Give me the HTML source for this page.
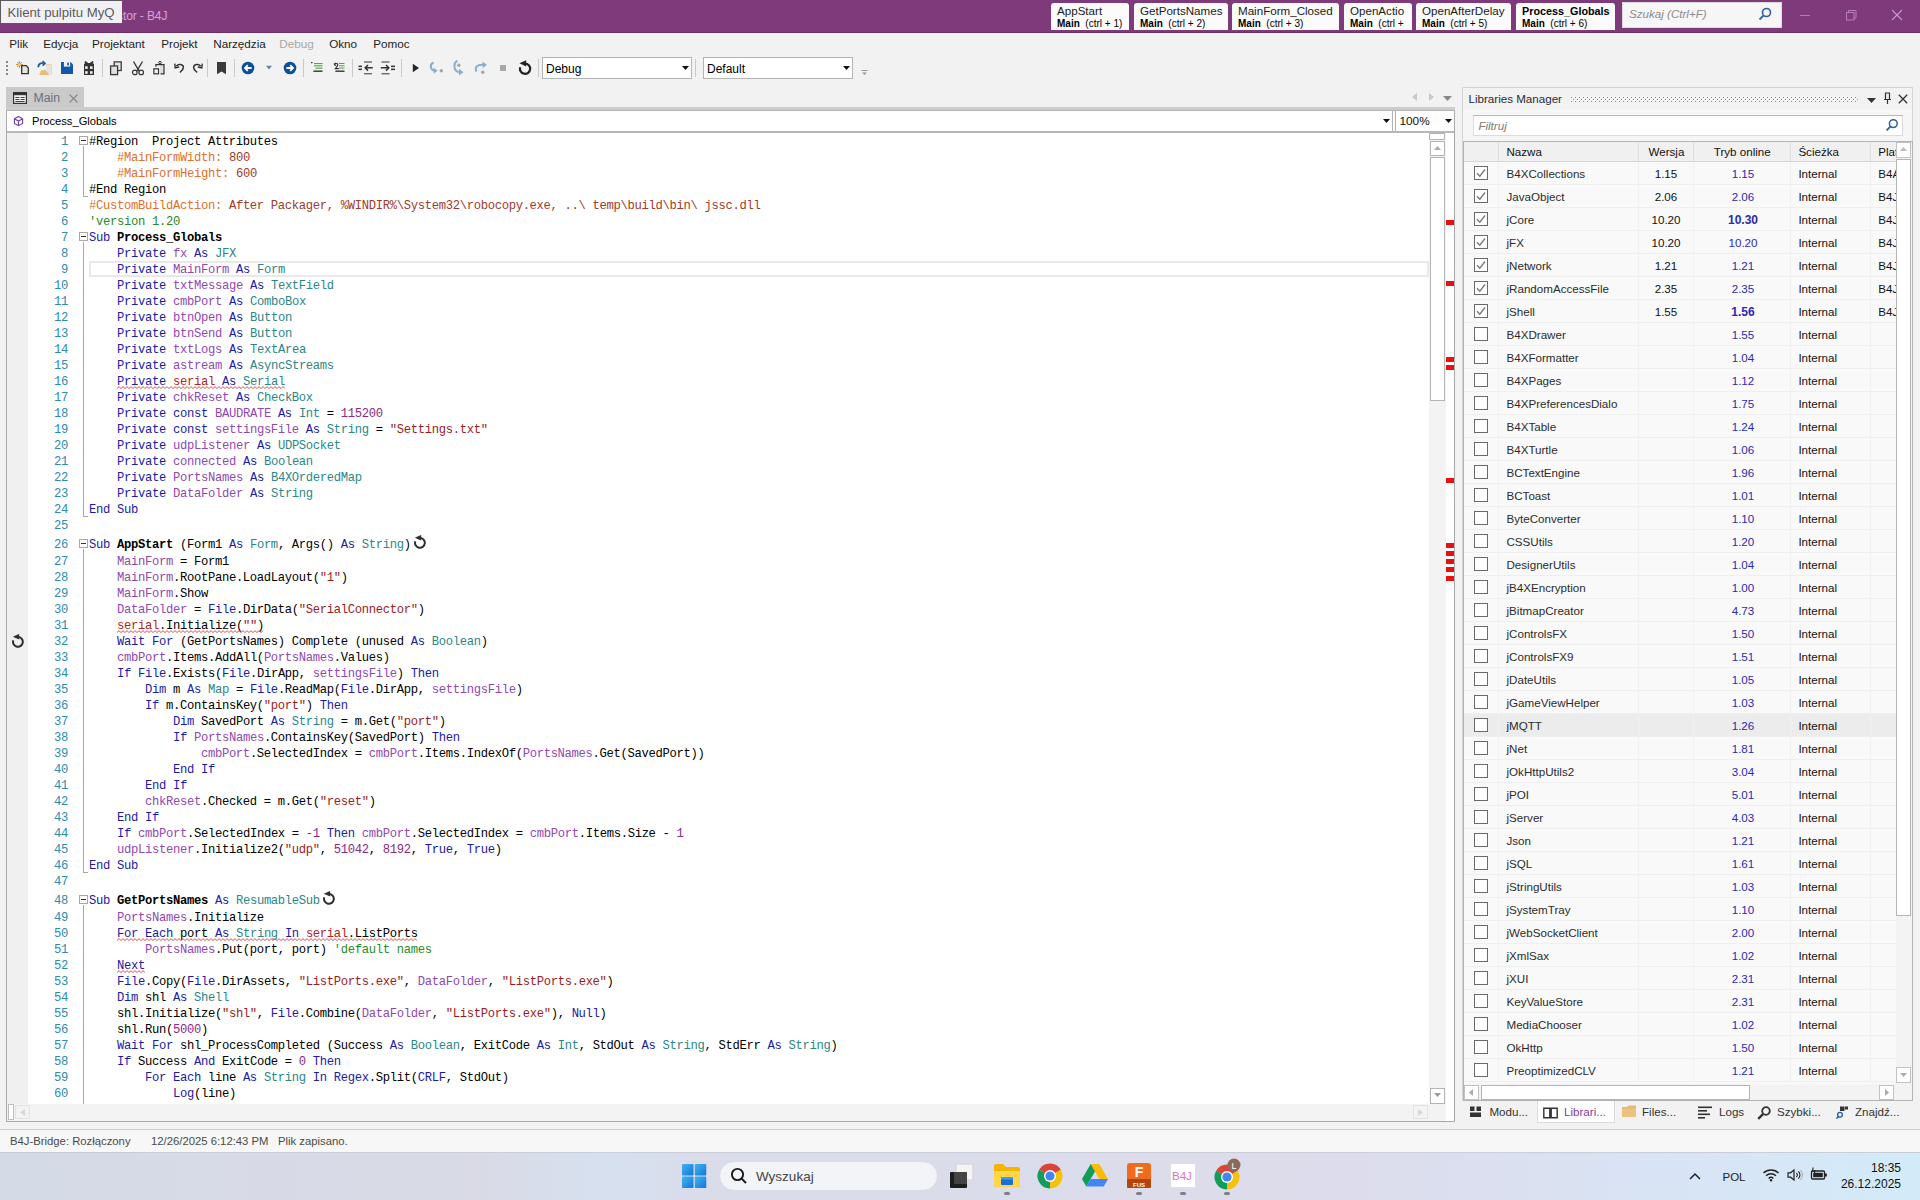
<!DOCTYPE html><html><head><meta charset="utf-8"><style>
*{box-sizing:border-box;margin:0;padding:0}
html,body{width:1920px;height:1200px;overflow:hidden;background:#f2f2f2;font-family:"Liberation Sans",sans-serif;font-size:11.5px;color:#000;position:relative}
.a{position:absolute}
.t{position:absolute;white-space:pre;line-height:1}
.mono{font-family:"Liberation Mono",monospace}
.k{color:#1b1ba4}.t2{color:#2b8787}.v{color:#8f48b4}.s{color:#9b1c1c}.n{color:#8a2a88}.d{color:#e0702a}.e{color:#a03a2a}.c{color:#2a8a2a}.b{font-weight:bold}.r{color:#b02428}
.sq{background-image:linear-gradient(45deg,transparent 35%,#e03030 35%,#e03030 65%,transparent 65%),linear-gradient(-45deg,transparent 35%,#e03030 35%,#e03030 65%,transparent 65%);background-size:4px 3px;background-repeat:repeat-x;background-position:0 100%}
</style></head><body>
<div class="a" style="left:0px;top:0px;width:1920px;height:33px;background:#7f3a7c"></div>
<div class="a" style="left:0px;top:32px;width:1920px;height:1px;background:#6a2f67"></div>
<div class="t " style="left:117px;top:10.14px;font-size:12px;color:#d6a2d4;letter-spacing:-0.1px">ctor - B4J</div>
<div class="a" style="left:0px;top:0px;width:122px;height:24px;background:#f1f1f5;border:1px solid #5a5a5a;border-right:none"></div>
<div class="t " style="left:7.5px;top:5.92px;font-size:13.2px;color:#5b5b5b;">Klient pulpitu MyQ</div>
<div class="a" style="left:1051px;top:3px;width:78px;height:27px;background:#fbfbfb;border-radius:3px 3px 0 0"></div>
<div class="a" style="left:1051px;top:3px;width:78px;height:27px;overflow:hidden">
<div class="t" style="left:6px;top:2.28px;font-size:11.6px;color:#1a1a1a">AppStart</div>
<div class="t" style="left:6px;top:15.73px;font-size:10px;color:#000"><b>Main</b>&nbsp;&nbsp;(ctrl + 1)</div>
</div>
<div class="a" style="left:1134px;top:3px;width:94px;height:27px;background:#fbfbfb;border-radius:3px 3px 0 0"></div>
<div class="a" style="left:1134px;top:3px;width:94px;height:27px;overflow:hidden">
<div class="t" style="left:6px;top:2.28px;font-size:11.6px;color:#1a1a1a">GetPortsNames</div>
<div class="t" style="left:6px;top:15.73px;font-size:10px;color:#000"><b>Main</b>&nbsp;&nbsp;(ctrl + 2)</div>
</div>
<div class="a" style="left:1232px;top:3px;width:107px;height:27px;background:#fbfbfb;border-radius:3px 3px 0 0"></div>
<div class="a" style="left:1232px;top:3px;width:107px;height:27px;overflow:hidden">
<div class="t" style="left:6px;top:2.28px;font-size:11.6px;color:#1a1a1a">MainForm_Closed</div>
<div class="t" style="left:6px;top:15.73px;font-size:10px;color:#000"><b>Main</b>&nbsp;&nbsp;(ctrl + 3)</div>
</div>
<div class="a" style="left:1344px;top:3px;width:68px;height:27px;background:#fbfbfb;border-radius:3px 3px 0 0"></div>
<div class="a" style="left:1344px;top:3px;width:68px;height:27px;overflow:hidden">
<div class="t" style="left:6px;top:2.28px;font-size:11.6px;color:#1a1a1a">OpenActio</div>
<div class="t" style="left:6px;top:15.73px;font-size:10px;color:#000"><b>Main</b>&nbsp;&nbsp;(ctrl +</div>
</div>
<div class="a" style="left:1416px;top:3px;width:95px;height:27px;background:#fbfbfb;border-radius:3px 3px 0 0"></div>
<div class="a" style="left:1416px;top:3px;width:95px;height:27px;overflow:hidden">
<div class="t" style="left:6px;top:2.28px;font-size:11.6px;color:#1a1a1a">OpenAfterDelay</div>
<div class="t" style="left:6px;top:15.73px;font-size:10px;color:#000"><b>Main</b>&nbsp;&nbsp;(ctrl + 5)</div>
</div>
<div class="a" style="left:1516px;top:3px;width:99px;height:27px;background:#fbfbfb;border-radius:3px 3px 0 0"></div>
<div class="a" style="left:1516px;top:3px;width:99px;height:27px;overflow:hidden">
<div class="t" style="left:6px;top:3.26px;font-size:10.8px;font-weight:bold;color:#000">Process_Globals</div>
<div class="t" style="left:6px;top:15.73px;font-size:10px;color:#000"><b>Main</b>&nbsp;&nbsp;(ctrl + 6)</div>
</div>
<div class="a" style="left:1622px;top:2px;width:160px;height:26px;background:#f6f6f6;border:1px solid #dcdcdc"></div>
<div class="t " style="left:1629px;top:8.48px;font-size:11.6px;color:#8c8c8c;font-style:italic">Szukaj (Ctrl+F)</div>
<svg class="a" style="left:1758px;top:7px;" width="14" height="14" viewBox="0 0 14 14"><circle cx="8.5" cy="5.5" r="4" fill="none" stroke="#2c5f9e" stroke-width="1.6"/><line x1="5.6" y1="8.4" x2="1.5" y2="12.5" stroke="#2c5f9e" stroke-width="1.8"/></svg>
<div class="a" style="left:1800px;top:15px;width:10px;height:1px;background:#b07cae"></div>
<svg class="a" style="left:1846px;top:10px;" width="11" height="11" viewBox="0 0 11 11"><rect x="0.5" y="2.5" width="7.5" height="7.5" fill="none" stroke="#b880b6"/><path d="M2.5 2.5V0.5h7.5v7.5h-2" fill="none" stroke="#b880b6"/></svg>
<svg class="a" style="left:1891px;top:9px;" width="12" height="12" viewBox="0 0 12 12"><path d="M1 1L11 11M11 1L1 11" stroke="#c89cc6" stroke-width="1.1"/></svg>
<div class="a" style="left:0px;top:33px;width:1920px;height:1px;background:#fbeefb"></div>
<div class="t " style="left:9.3px;top:38.09px;font-size:11.7px;color:#1e1e1e;">Plik</div>
<div class="t " style="left:43.2px;top:38.09px;font-size:11.7px;color:#1e1e1e;">Edycja</div>
<div class="t " style="left:92px;top:38.09px;font-size:11.7px;color:#1e1e1e;">Projektant</div>
<div class="t " style="left:161.2px;top:38.09px;font-size:11.7px;color:#1e1e1e;">Projekt</div>
<div class="t " style="left:213.2px;top:38.09px;font-size:11.7px;color:#1e1e1e;">Narzędzia</div>
<div class="t " style="left:279.2px;top:38.09px;font-size:11.7px;color:#a8a8a8;">Debug</div>
<div class="t " style="left:329.2px;top:38.09px;font-size:11.7px;color:#1e1e1e;">Okno</div>
<div class="t " style="left:373.2px;top:38.09px;font-size:11.7px;color:#1e1e1e;">Pomoc</div>
<div class="a" style="left:6px;top:61px;width:2px;height:2px;background:#8a8a8a"></div>
<div class="a" style="left:6px;top:65px;width:2px;height:2px;background:#8a8a8a"></div>
<div class="a" style="left:6px;top:69px;width:2px;height:2px;background:#8a8a8a"></div>
<div class="a" style="left:6px;top:73px;width:2px;height:2px;background:#8a8a8a"></div>
<div class="a" style="left:102px;top:59px;width:1px;height:18px;background:#c9c9c9"></div>
<div class="a" style="left:207px;top:59px;width:1px;height:18px;background:#c9c9c9"></div>
<div class="a" style="left:234px;top:59px;width:1px;height:18px;background:#c9c9c9"></div>
<div class="a" style="left:303px;top:59px;width:1px;height:18px;background:#c9c9c9"></div>
<div class="a" style="left:352px;top:59px;width:1px;height:18px;background:#c9c9c9"></div>
<div class="a" style="left:401px;top:59px;width:1px;height:18px;background:#c9c9c9"></div>
<div class="a" style="left:538px;top:59px;width:1px;height:18px;background:#c9c9c9"></div>
<div class="a" style="left:695px;top:59px;width:1px;height:18px;background:#c9c9c9"></div>
<svg class="a" style="left:14px;top:59px;" width="16" height="16" viewBox="0 0 16 16"><g stroke="#e08a1a" stroke-width="0.9"><line x1="5.5" y1="2" x2="5.5" y2="9"/><line x1="2" y1="5.5" x2="9" y2="5.5"/><line x1="3" y1="3" x2="8" y2="8"/><line x1="8" y1="3" x2="3" y2="8"/></g><circle cx="5.5" cy="5.5" r="1.7" fill="#f6d27a" stroke="#e08a1a" stroke-width="0.6"/><path d="M7.7 6.6H12.2L14.3 8.7V14.6H7.7z" fill="#e6e6e6" stroke="#333" stroke-width="1.3"/></svg>
<svg class="a" style="left:37px;top:60px;" width="16" height="16" viewBox="0 0 16 16"><path d="M9 4.5h5.3v10.4" fill="none" stroke="#ecd3a6" stroke-width="1"/><rect x="8.6" y="5" width="5.2" height="9.5" fill="#e4e4e4"/><path d="M9.8 14.9H2.2L4.2 10.3H8.6L12.6 14.9z" fill="#e6bd78"/><path d="M1.6 7.2C0.8 4.6 3.2 2.6 6.8 3.4" fill="none" stroke="#1a5aa8" stroke-width="1.8"/><path d="M5.6 1.2L8 3.5L5.6 5.6" fill="none" stroke="#1a5aa8" stroke-width="1.6"/></svg>
<svg class="a" style="left:61px;top:62px;" width="12" height="12" viewBox="0 0 12 12"><path d="M0 0H9.6L12 2.4V12H0z" fill="#1358a8"/><rect x="2.9" y="0" width="6.3" height="4.6" fill="#eef2f8"/><rect x="6.2" y="0.6" width="1.7" height="2.8" fill="#1358a8"/></svg>
<svg class="a" style="left:83px;top:60px;" width="12" height="16" viewBox="0 0 12 16"><path d="M6 4L2.2 1.4V4zM6 4L9.8 1.4V4z" fill="#333" stroke="#333" stroke-width="1"/><rect x="1" y="4" width="10" height="11" fill="#333"/><rect x="2.1" y="6.3" width="2.6" height="2.6" fill="#eee"/><rect x="7" y="6.3" width="2.6" height="2.6" fill="#eee"/><rect x="2.1" y="11.2" width="2.6" height="2.6" fill="#eee"/><rect x="7" y="11.2" width="2.6" height="2.6" fill="#eee"/></svg>
<svg class="a" style="left:109px;top:60px;" width="14" height="16" viewBox="0 0 14 16"><rect x="5.2" y="1.9" width="7" height="8.6" fill="#e8e8e8" stroke="#3a3a3a" stroke-width="1.3"/><rect x="1.6" y="6" width="7" height="8.6" fill="#e0e0e0" stroke="#3a3a3a" stroke-width="1.3"/></svg>
<svg class="a" style="left:131px;top:60px;" width="14" height="16" viewBox="0 0 14 16"><path d="M2.5 1.5L8.2 11.2M11.5 1.5L5.8 11.2" stroke="#3a3a3a" stroke-width="1.4" fill="none"/><circle cx="3.8" cy="12.4" r="2.3" fill="none" stroke="#3a3a3a" stroke-width="1.2"/><circle cx="10.2" cy="12.4" r="2.3" fill="none" stroke="#3a3a3a" stroke-width="1.2"/></svg>
<svg class="a" style="left:152px;top:60px;" width="14" height="16" viewBox="0 0 14 16"><rect x="8" y="5.2" width="3.8" height="8.6" fill="#dedede"/><path d="M3.9 6.8V4.6H12V13.8H8.6" fill="none" stroke="#333" stroke-width="1.2"/><path d="M5.8 4.6L6.8 3.4H9.2L10.2 4.6z" fill="#333"/><circle cx="8" cy="2.6" r="1.2" fill="#fff" stroke="#333" stroke-width="1"/><rect x="1.9" y="8.8" width="4.6" height="5" fill="#f8f8f8" stroke="#333" stroke-width="1.2"/></svg>
<svg class="a" style="left:174px;top:62px;" width="11" height="11" viewBox="0 0 11 11"><path d="M2.4 4.2C4.4 1.4 9.4 2.2 9.4 5.6C9.4 7.8 7.4 9 5.8 10.4" fill="none" stroke="#333" stroke-width="1.5"/><path d="M0.8 1.6L1.2 5.8L5.2 5" fill="none" stroke="#333" stroke-width="1.4"/></svg>
<svg class="a" style="left:192px;top:62px;" width="11" height="11" viewBox="0 0 11 11"><path d="M8.6 4.2C6.6 1.4 1.6 2.2 1.6 5.6C1.6 7.8 3.6 9 5.2 10.4" fill="none" stroke="#333" stroke-width="1.5"/><path d="M10.2 1.6L9.8 5.8L5.8 5" fill="none" stroke="#333" stroke-width="1.4"/></svg>
<svg class="a" style="left:217px;top:62px;" width="9" height="13" viewBox="0 0 9 13"><path d="M0 0H9V12.3L4.5 9.6L0 12.3z" fill="#3a3a3a"/></svg>
<svg class="a" style="left:241px;top:61px;" width="14" height="14" viewBox="0 0 14 14"><circle cx="7" cy="7" r="6.3" fill="#0d4f9a"/><path d="M10.6 7H4.2M6.8 4.2L4 7L6.8 9.8" fill="none" stroke="#fff" stroke-width="1.8"/></svg>
<svg class="a" style="left:265px;top:65px;" width="8" height="5" viewBox="0 0 8 5"><path d="M1 0.8H7L4 4.4z" fill="#6a80b0"/></svg>
<svg class="a" style="left:283px;top:61px;" width="14" height="14" viewBox="0 0 14 14"><circle cx="7" cy="7" r="6.3" fill="#0d4f9a"/><path d="M3.4 7H9.8M7.2 4.2L10 7L7.2 9.8" fill="none" stroke="#fff" stroke-width="1.8"/></svg>
<svg class="a" style="left:311px;top:62px;" width="12" height="11" viewBox="0 0 12 11"><rect x="0" y="0" width="1.5" height="1.2" fill="#333"/><g fill="#4caa3c"><rect x="3" y="1" width="8.5" height="1.1"/><rect x="3" y="3.3" width="8.5" height="1.1"/><rect x="4.5" y="5.6" width="7" height="1.1"/></g><rect x="2.4" y="8.5" width="9.1" height="1.4" fill="#333"/></svg>
<svg class="a" style="left:333px;top:62px;" width="12" height="11" viewBox="0 0 12 11"><path d="M1 2.5L2.6 0.8M1 2.5L3 3.6M1.5 2.4C3.5 0.8 6 1.6 4.2 4.2L2.4 6.6H5.8" fill="none" stroke="#333" stroke-width="1.1"/><g fill="#4caa3c"><rect x="6" y="1" width="5.5" height="1"/><rect x="6" y="3.3" width="5.5" height="1"/><rect x="6" y="5.6" width="5.5" height="1"/></g><rect x="2.4" y="8.5" width="9.1" height="1.4" fill="#333"/></svg>
<svg class="a" style="left:358px;top:61px;" width="16" height="14" viewBox="0 0 16 14"><rect x="6" y="0.5" width="8" height="1" fill="#333"/><rect x="6" y="12.3" width="8" height="1" fill="#333"/><rect x="0.5" y="4.6" width="3.5" height="1.5" fill="#333"/><rect x="0.5" y="7.6" width="3.5" height="1.5" fill="#333"/><path d="M14.8 6.8H7.5M10 4L7.2 6.8L10 9.6" fill="none" stroke="#333" stroke-width="1.5"/></svg>
<svg class="a" style="left:380px;top:61px;" width="16" height="14" viewBox="0 0 16 14"><rect x="1.5" y="0.5" width="8" height="1" fill="#333"/><rect x="1.5" y="12.3" width="8" height="1" fill="#333"/><rect x="11" y="4.6" width="4" height="1.5" fill="#333"/><rect x="11" y="7.6" width="4" height="1.5" fill="#333"/><path d="M0.8 6.8H8.5M6 4L8.8 6.8L6 9.6" fill="none" stroke="#333" stroke-width="1.5"/></svg>
<svg class="a" style="left:412px;top:63px;" width="8" height="10" viewBox="0 0 8 10"><path d="M0.8 0.8L7 5L0.8 9.2z" fill="#262626"/></svg>
<svg class="a" style="left:429px;top:61px;" width="16" height="13" viewBox="0 0 16 13"><path d="M4.6 1.4C0.6 3.2 0.8 8.4 5.4 9.8" fill="none" stroke="#86aed0" stroke-width="2"/><path d="M4.6 6.6L8.6 9.8L4.8 12.8z" fill="#86aed0"/><circle cx="12.3" cy="9.8" r="1.7" fill="#a4a4a4"/></svg>
<svg class="a" style="left:453px;top:60px;" width="13" height="16" viewBox="0 0 13 16"><path d="M4.4 0.8C0.2 2.6 0.2 10.6 5.8 12.2" fill="none" stroke="#86aed0" stroke-width="2"/><path d="M6 8.8L10.4 12.2L6 15.4z" fill="#86aed0"/><circle cx="5.8" cy="5.2" r="1.7" fill="#a4a4a4"/></svg>
<svg class="a" style="left:474px;top:61px;" width="14" height="14" viewBox="0 0 14 14"><path d="M2.4 10.6C0.4 6 3.6 3 9.6 3.8" fill="none" stroke="#86aed0" stroke-width="2"/><path d="M8.6 0.4L12.8 3.8L8.6 7.2z" fill="#86aed0"/><circle cx="8.8" cy="11.2" r="1.7" fill="#a4a4a4"/></svg>
<div class="a" style="left:500px;top:65px;width:6px;height:6px;background:#a8a8a8"></div>
<svg class="a" style="left:517px;top:60px;" width="16" height="16" viewBox="0 0 16 16"><path d="M8 3.6A5.1 5.1 0 1 1 3.2 7.2" fill="none" stroke="#222" stroke-width="2.2"/><path d="M2.4 3.2L9.2 0.2V6.6z" fill="#222"/></svg>
<div class="a" style="left:542px;top:57px;width:150px;height:22px;background:#fff;border:1px solid #b5b5b5"></div>
<div class="t " style="left:546px;top:62.84px;font-size:12px;color:#000;">Debug</div>
<svg class="a" style="left:682px;top:66px;" width="7" height="4" viewBox="0 0 7 4"><path d="M0 0H7L3.5 4z" fill="#111"/></svg>
<div class="a" style="left:703px;top:57px;width:150px;height:22px;background:#fff;border:1px solid #b5b5b5"></div>
<div class="t " style="left:707px;top:62.84px;font-size:12px;color:#000;">Default</div>
<svg class="a" style="left:843px;top:66px;" width="7" height="4" viewBox="0 0 7 4"><path d="M0 0H7L3.5 4z" fill="#111"/></svg>
<svg class="a" style="left:861px;top:70px;" width="7" height="6" viewBox="0 0 7 6"><path d="M0.5 0.5H6.5" stroke="#999"/><path d="M1 2.5H6L3.5 5z" fill="#999"/></svg>
<div class="a" style="left:6px;top:87px;width:78px;height:20px;background:#cacaca"></div>
<svg class="a" style="left:13px;top:92px;" width="14" height="12" viewBox="0 0 14 12"><rect x="0.6" y="0.6" width="12.8" height="10.8" fill="#f2f2f2" stroke="#333" stroke-width="1.2"/><rect x="0.6" y="0.6" width="12.8" height="2.6" fill="#333"/><g fill="#444"><rect x="2.4" y="5" width="4" height="1"/><rect x="7.6" y="5" width="4" height="1"/><rect x="2.4" y="7" width="4" height="1"/><rect x="7.6" y="7" width="4" height="1"/><rect x="2.4" y="9" width="9.2" height="1"/></g></svg>
<div class="t " style="left:33.5px;top:91.59px;font-size:12.3px;color:#6e6e80;">Main</div>
<svg class="a" style="left:69px;top:94px;" width="9" height="9" viewBox="0 0 9 9"><path d="M0.5 0.5L8.5 8.5M8.5 0.5L0.5 8.5" stroke="#8a8a8a" stroke-width="1.2"/></svg>
<div class="a" style="left:6px;top:107px;width:1449px;height:1015px;background:#fff;border:1px solid #a9a9a9;border-top:none"></div>
<div class="a" style="left:6px;top:107px;width:1449px;height:3px;background:#cdcdcd"></div>
<div class="a" style="left:6px;top:110px;width:1449px;height:1px;background:#b3b3b3"></div>
<div class="a" style="left:7px;top:111px;width:1386px;height:21px;background:#fff;border-right:1px solid #b4b4b4;border-bottom:1px solid #b4b4b4"></div>
<div class="a" style="left:1395px;top:111px;width:59px;height:21px;background:#fff;border-left:1px solid #b4b4b4;border-bottom:1px solid #b4b4b4"></div>
<div class="a" style="left:1393px;top:111px;width:2px;height:21px;background:#fbfbfb"></div>
<div class="a" style="left:7px;top:131px;width:1447px;height:2px;background:#b8b8b8"></div>
<svg class="a" style="left:13px;top:115px;" width="11" height="12" viewBox="0 0 11 12"><path d="M5.5 1.5L9.6 3.8V8.4L5.5 10.7L1.4 8.4V3.8z M1.4 3.8L5.5 6.1L9.6 3.8 M5.5 6.1V10.7" fill="none" stroke="#6a40a8" stroke-width="1.1"/></svg>
<div class="t " style="left:32px;top:116.12px;font-size:11.2px;color:#000;">Process_Globals</div>
<svg class="a" style="left:1383px;top:119px;" width="7" height="4" viewBox="0 0 7 4"><path d="M0 0H7L3.5 4z" fill="#111"/></svg>
<div class="t " style="left:1399.5px;top:116.21px;font-size:11.8px;color:#111;">100%</div>
<svg class="a" style="left:1445px;top:119px;" width="7" height="4" viewBox="0 0 7 4"><path d="M0 0H7L3.5 4z" fill="#111"/></svg>
<div class="a" style="left:7px;top:133px;width:21px;height:971px;background:#f0f0f0"></div>
<div class="a" style="left:1429px;top:133px;width:17px;height:971px;background:#f3f3f3"></div>
<div class="a" style="left:1429px;top:133px;width:16px;height:7px;background:#fff;border:1px solid #b4b4b4"></div>
<div class="a" style="left:1430px;top:141px;width:15px;height:15px;background:#fff;border:1px solid #b4b4b4"></div>
<svg class="a" style="left:1434px;top:146px;" width="7" height="4" viewBox="0 0 7 4"><path d="M0 4H7L3.5 0z" fill="#aaa"/></svg>
<div class="a" style="left:1430px;top:157px;width:15px;height:244px;background:#fff;border:1px solid #b4b4b4"></div>
<div class="a" style="left:1430px;top:1088px;width:15px;height:16px;background:#fff;border:1px solid #b4b4b4"></div>
<svg class="a" style="left:1434px;top:1093px;" width="7" height="4" viewBox="0 0 7 4"><path d="M0 0H7L3.5 4z" fill="#999"/></svg>
<div class="a" style="left:7px;top:1104px;width:1447px;height:17px;background:#f3f3f3"></div>
<div class="a" style="left:1446px;top:133px;width:8px;height:971px;background:#fff"></div>
<div class="a" style="left:8px;top:1104px;width:6px;height:16px;background:#fff;border:1px solid #bdbdbd"></div>
<div class="a" style="left:15px;top:1105px;width:15px;height:14px;background:#f3f3f3;border:1px solid #e3e3e3"></div>
<svg class="a" style="left:20px;top:1109px;" width="5" height="7" viewBox="0 0 5 7"><path d="M5 0V7L0 3.5z" fill="#d8d8d8"/></svg>
<div class="a" style="left:1413px;top:1105px;width:15px;height:14px;background:#f3f3f3;border:1px solid #e3e3e3"></div>
<svg class="a" style="left:1418px;top:1109px;" width="5" height="7" viewBox="0 0 5 7"><path d="M0 0V7L5 3.5z" fill="#d8d8d8"/></svg>
<div class="a" style="left:1430px;top:1104px;width:16px;height:17px;background:#f3f3f3"></div>
<div class="a" style="left:1446px;top:1104px;width:8px;height:17px;background:#fff"></div>
<div class="a" style="left:1446px;top:220px;width:8px;height:5px;background:#e81010"></div>
<div class="a" style="left:1446px;top:281px;width:8px;height:5px;background:#e81010"></div>
<div class="a" style="left:1446px;top:357px;width:8px;height:5px;background:#e81010"></div>
<div class="a" style="left:1446px;top:365px;width:8px;height:5px;background:#e81010"></div>
<div class="a" style="left:1446px;top:478px;width:8px;height:5px;background:#e81010"></div>
<div class="a" style="left:1446px;top:543px;width:8px;height:5px;background:#e81010"></div>
<div class="a" style="left:1446px;top:551px;width:8px;height:5px;background:#e81010"></div>
<div class="a" style="left:1446px;top:559px;width:8px;height:5px;background:#e81010"></div>
<div class="a" style="left:1446px;top:567px;width:8px;height:5px;background:#e81010"></div>
<div class="a" style="left:1446px;top:576px;width:8px;height:5px;background:#e81010"></div>
<div class="a" style="left:89px;top:261px;width:1340px;height:16px;border:2px solid #e9e9e9"></div>
<div class="t mono" style="right:1852px;top:136.45px;font-size:12.2px;letter-spacing:-0.32px;color:#2b8cb0">1</div>
<div class="t mono" style="left:89px;top:136.45px;font-size:12.2px;letter-spacing:-0.32px;color:#000">#Region  Project Attributes</div>
<div class="t mono" style="right:1852px;top:152.45px;font-size:12.2px;letter-spacing:-0.32px;color:#2b8cb0">2</div>
<div class="t mono" style="left:89px;top:152.45px;font-size:12.2px;letter-spacing:-0.32px;color:#000">    <span class="d">#MainFormWidth:</span> <span class="e">800</span></div>
<div class="t mono" style="right:1852px;top:168.45px;font-size:12.2px;letter-spacing:-0.32px;color:#2b8cb0">3</div>
<div class="t mono" style="left:89px;top:168.45px;font-size:12.2px;letter-spacing:-0.32px;color:#000">    <span class="d">#MainFormHeight:</span> <span class="e">600</span></div>
<div class="t mono" style="right:1852px;top:184.45px;font-size:12.2px;letter-spacing:-0.32px;color:#2b8cb0">4</div>
<div class="t mono" style="left:89px;top:184.45px;font-size:12.2px;letter-spacing:-0.32px;color:#000">#End Region</div>
<div class="t mono" style="right:1852px;top:200.45px;font-size:12.2px;letter-spacing:-0.32px;color:#2b8cb0">5</div>
<div class="t mono" style="left:89px;top:200.45px;font-size:12.2px;letter-spacing:-0.32px;color:#000"><span class="d">#CustomBuildAction:</span> <span class="e">After Packager, %WINDIR%\System32\robocopy.exe, ..\ temp\build\bin\ jssc.dll</span></div>
<div class="t mono" style="right:1852px;top:216.45px;font-size:12.2px;letter-spacing:-0.32px;color:#2b8cb0">6</div>
<div class="t mono" style="left:89px;top:216.45px;font-size:12.2px;letter-spacing:-0.32px;color:#000"><span class="c">&#x27;version 1.20</span></div>
<div class="t mono" style="right:1852px;top:232.45px;font-size:12.2px;letter-spacing:-0.32px;color:#2b8cb0">7</div>
<div class="t mono" style="left:89px;top:232.45px;font-size:12.2px;letter-spacing:-0.32px;color:#000"><span class="k">Sub</span> <span class="b">Process_Globals</span></div>
<div class="t mono" style="right:1852px;top:248.45px;font-size:12.2px;letter-spacing:-0.32px;color:#2b8cb0">8</div>
<div class="t mono" style="left:89px;top:248.45px;font-size:12.2px;letter-spacing:-0.32px;color:#000">    <span class="k">Private</span> <span class="v">fx</span> <span class="k">As</span> <span class="t2">JFX</span></div>
<div class="t mono" style="right:1852px;top:264.45px;font-size:12.2px;letter-spacing:-0.32px;color:#2b8cb0">9</div>
<div class="t mono" style="left:89px;top:264.45px;font-size:12.2px;letter-spacing:-0.32px;color:#000">    <span class="k">Private</span> <span class="v">MainForm</span> <span class="k">As</span> <span class="t2">Form</span></div>
<div class="t mono" style="right:1852px;top:280.45px;font-size:12.2px;letter-spacing:-0.32px;color:#2b8cb0">10</div>
<div class="t mono" style="left:89px;top:280.45px;font-size:12.2px;letter-spacing:-0.32px;color:#000">    <span class="k">Private</span> <span class="v">txtMessage</span> <span class="k">As</span> <span class="t2">TextField</span></div>
<div class="t mono" style="right:1852px;top:296.45px;font-size:12.2px;letter-spacing:-0.32px;color:#2b8cb0">11</div>
<div class="t mono" style="left:89px;top:296.45px;font-size:12.2px;letter-spacing:-0.32px;color:#000">    <span class="k">Private</span> <span class="v">cmbPort</span> <span class="k">As</span> <span class="t2">ComboBox</span></div>
<div class="t mono" style="right:1852px;top:312.45px;font-size:12.2px;letter-spacing:-0.32px;color:#2b8cb0">12</div>
<div class="t mono" style="left:89px;top:312.45px;font-size:12.2px;letter-spacing:-0.32px;color:#000">    <span class="k">Private</span> <span class="v">btnOpen</span> <span class="k">As</span> <span class="t2">Button</span></div>
<div class="t mono" style="right:1852px;top:328.45px;font-size:12.2px;letter-spacing:-0.32px;color:#2b8cb0">13</div>
<div class="t mono" style="left:89px;top:328.45px;font-size:12.2px;letter-spacing:-0.32px;color:#000">    <span class="k">Private</span> <span class="v">btnSend</span> <span class="k">As</span> <span class="t2">Button</span></div>
<div class="t mono" style="right:1852px;top:344.45px;font-size:12.2px;letter-spacing:-0.32px;color:#2b8cb0">14</div>
<div class="t mono" style="left:89px;top:344.45px;font-size:12.2px;letter-spacing:-0.32px;color:#000">    <span class="k">Private</span> <span class="v">txtLogs</span> <span class="k">As</span> <span class="t2">TextArea</span></div>
<div class="t mono" style="right:1852px;top:360.45px;font-size:12.2px;letter-spacing:-0.32px;color:#2b8cb0">15</div>
<div class="t mono" style="left:89px;top:360.45px;font-size:12.2px;letter-spacing:-0.32px;color:#000">    <span class="k">Private</span> <span class="v">astream</span> <span class="k">As</span> <span class="t2">AsyncStreams</span></div>
<div class="t mono" style="right:1852px;top:376.45px;font-size:12.2px;letter-spacing:-0.32px;color:#2b8cb0">16</div>
<div class="t mono" style="left:89px;top:376.45px;font-size:12.2px;letter-spacing:-0.32px;color:#000">    <span class="k">Private</span> <span class="r">serial</span> <span class="k">As</span> <span class="t2">Serial</span></div>
<div class="t mono" style="right:1852px;top:392.45px;font-size:12.2px;letter-spacing:-0.32px;color:#2b8cb0">17</div>
<div class="t mono" style="left:89px;top:392.45px;font-size:12.2px;letter-spacing:-0.32px;color:#000">    <span class="k">Private</span> <span class="v">chkReset</span> <span class="k">As</span> <span class="t2">CheckBox</span></div>
<div class="t mono" style="right:1852px;top:408.45px;font-size:12.2px;letter-spacing:-0.32px;color:#2b8cb0">18</div>
<div class="t mono" style="left:89px;top:408.45px;font-size:12.2px;letter-spacing:-0.32px;color:#000">    <span class="k">Private</span> <span class="k">const</span> <span class="v">BAUDRATE</span> <span class="k">As</span> <span class="t2">Int</span> = <span class="n">115200</span></div>
<div class="t mono" style="right:1852px;top:424.45px;font-size:12.2px;letter-spacing:-0.32px;color:#2b8cb0">19</div>
<div class="t mono" style="left:89px;top:424.45px;font-size:12.2px;letter-spacing:-0.32px;color:#000">    <span class="k">Private</span> <span class="k">const</span> <span class="v">settingsFile</span> <span class="k">As</span> <span class="t2">String</span> = <span class="s">&quot;Settings.txt&quot;</span></div>
<div class="t mono" style="right:1852px;top:440.45px;font-size:12.2px;letter-spacing:-0.32px;color:#2b8cb0">20</div>
<div class="t mono" style="left:89px;top:440.45px;font-size:12.2px;letter-spacing:-0.32px;color:#000">    <span class="k">Private</span> <span class="v">udpListener</span> <span class="k">As</span> <span class="t2">UDPSocket</span></div>
<div class="t mono" style="right:1852px;top:456.45px;font-size:12.2px;letter-spacing:-0.32px;color:#2b8cb0">21</div>
<div class="t mono" style="left:89px;top:456.45px;font-size:12.2px;letter-spacing:-0.32px;color:#000">    <span class="k">Private</span> <span class="v">connected</span> <span class="k">As</span> <span class="t2">Boolean</span></div>
<div class="t mono" style="right:1852px;top:472.45px;font-size:12.2px;letter-spacing:-0.32px;color:#2b8cb0">22</div>
<div class="t mono" style="left:89px;top:472.45px;font-size:12.2px;letter-spacing:-0.32px;color:#000">    <span class="k">Private</span> <span class="v">PortsNames</span> <span class="k">As</span> <span class="t2">B4XOrderedMap</span></div>
<div class="t mono" style="right:1852px;top:488.45px;font-size:12.2px;letter-spacing:-0.32px;color:#2b8cb0">23</div>
<div class="t mono" style="left:89px;top:488.45px;font-size:12.2px;letter-spacing:-0.32px;color:#000">    <span class="k">Private</span> <span class="v">DataFolder</span> <span class="k">As</span> <span class="t2">String</span></div>
<div class="t mono" style="right:1852px;top:504.45px;font-size:12.2px;letter-spacing:-0.32px;color:#2b8cb0">24</div>
<div class="t mono" style="left:89px;top:504.45px;font-size:12.2px;letter-spacing:-0.32px;color:#000"><span class="k">End Sub</span></div>
<div class="t mono" style="right:1852px;top:520.45px;font-size:12.2px;letter-spacing:-0.32px;color:#2b8cb0">25</div>
<div class="t mono" style="left:89px;top:520.45px;font-size:12.2px;letter-spacing:-0.32px;color:#000"></div>
<div class="t mono" style="right:1852px;top:539.45px;font-size:12.2px;letter-spacing:-0.32px;color:#2b8cb0">26</div>
<div class="t mono" style="left:89px;top:539.45px;font-size:12.2px;letter-spacing:-0.32px;color:#000"><span class="k">Sub</span> <span class="b">AppStart</span> (Form1 <span class="k">As</span> <span class="t2">Form</span>, Args() <span class="k">As</span> <span class="t2">String</span>)</div>
<div class="t mono" style="right:1852px;top:556.45px;font-size:12.2px;letter-spacing:-0.32px;color:#2b8cb0">27</div>
<div class="t mono" style="left:89px;top:556.45px;font-size:12.2px;letter-spacing:-0.32px;color:#000">    <span class="v">MainForm</span> = Form1</div>
<div class="t mono" style="right:1852px;top:572.45px;font-size:12.2px;letter-spacing:-0.32px;color:#2b8cb0">28</div>
<div class="t mono" style="left:89px;top:572.45px;font-size:12.2px;letter-spacing:-0.32px;color:#000">    <span class="v">MainForm</span>.RootPane.LoadLayout(<span class="s">&quot;1&quot;</span>)</div>
<div class="t mono" style="right:1852px;top:588.45px;font-size:12.2px;letter-spacing:-0.32px;color:#2b8cb0">29</div>
<div class="t mono" style="left:89px;top:588.45px;font-size:12.2px;letter-spacing:-0.32px;color:#000">    <span class="v">MainForm</span>.Show</div>
<div class="t mono" style="right:1852px;top:604.45px;font-size:12.2px;letter-spacing:-0.32px;color:#2b8cb0">30</div>
<div class="t mono" style="left:89px;top:604.45px;font-size:12.2px;letter-spacing:-0.32px;color:#000">    <span class="v">DataFolder</span> = <span class="k">File</span>.DirData(<span class="s">&quot;SerialConnector&quot;</span>)</div>
<div class="t mono" style="right:1852px;top:620.45px;font-size:12.2px;letter-spacing:-0.32px;color:#2b8cb0">31</div>
<div class="t mono" style="left:89px;top:620.45px;font-size:12.2px;letter-spacing:-0.32px;color:#000">    <span class="r">serial</span>.Initialize(<span class="s">&quot;&quot;</span>)</div>
<div class="t mono" style="right:1852px;top:636.45px;font-size:12.2px;letter-spacing:-0.32px;color:#2b8cb0">32</div>
<div class="t mono" style="left:89px;top:636.45px;font-size:12.2px;letter-spacing:-0.32px;color:#000">    <span class="k">Wait For</span> (GetPortsNames) Complete (unused <span class="k">As</span> <span class="t2">Boolean</span>)</div>
<div class="t mono" style="right:1852px;top:652.45px;font-size:12.2px;letter-spacing:-0.32px;color:#2b8cb0">33</div>
<div class="t mono" style="left:89px;top:652.45px;font-size:12.2px;letter-spacing:-0.32px;color:#000">    <span class="v">cmbPort</span>.Items.AddAll(<span class="v">PortsNames</span>.Values)</div>
<div class="t mono" style="right:1852px;top:668.45px;font-size:12.2px;letter-spacing:-0.32px;color:#2b8cb0">34</div>
<div class="t mono" style="left:89px;top:668.45px;font-size:12.2px;letter-spacing:-0.32px;color:#000">    <span class="k">If</span> <span class="k">File</span>.Exists(<span class="k">File</span>.DirApp, <span class="v">settingsFile</span>) <span class="k">Then</span></div>
<div class="t mono" style="right:1852px;top:684.45px;font-size:12.2px;letter-spacing:-0.32px;color:#2b8cb0">35</div>
<div class="t mono" style="left:89px;top:684.45px;font-size:12.2px;letter-spacing:-0.32px;color:#000">        <span class="k">Dim</span> m <span class="k">As</span> <span class="t2">Map</span> = <span class="k">File</span>.ReadMap(<span class="k">File</span>.DirApp, <span class="v">settingsFile</span>)</div>
<div class="t mono" style="right:1852px;top:700.45px;font-size:12.2px;letter-spacing:-0.32px;color:#2b8cb0">36</div>
<div class="t mono" style="left:89px;top:700.45px;font-size:12.2px;letter-spacing:-0.32px;color:#000">        <span class="k">If</span> m.ContainsKey(<span class="s">&quot;port&quot;</span>) <span class="k">Then</span></div>
<div class="t mono" style="right:1852px;top:716.45px;font-size:12.2px;letter-spacing:-0.32px;color:#2b8cb0">37</div>
<div class="t mono" style="left:89px;top:716.45px;font-size:12.2px;letter-spacing:-0.32px;color:#000">            <span class="k">Dim</span> SavedPort <span class="k">As</span> <span class="t2">String</span> = m.Get(<span class="s">&quot;port&quot;</span>)</div>
<div class="t mono" style="right:1852px;top:732.45px;font-size:12.2px;letter-spacing:-0.32px;color:#2b8cb0">38</div>
<div class="t mono" style="left:89px;top:732.45px;font-size:12.2px;letter-spacing:-0.32px;color:#000">            <span class="k">If</span> <span class="v">PortsNames</span>.ContainsKey(SavedPort) <span class="k">Then</span></div>
<div class="t mono" style="right:1852px;top:748.45px;font-size:12.2px;letter-spacing:-0.32px;color:#2b8cb0">39</div>
<div class="t mono" style="left:89px;top:748.45px;font-size:12.2px;letter-spacing:-0.32px;color:#000">                <span class="v">cmbPort</span>.SelectedIndex = <span class="v">cmbPort</span>.Items.IndexOf(<span class="v">PortsNames</span>.Get(SavedPort))</div>
<div class="t mono" style="right:1852px;top:764.45px;font-size:12.2px;letter-spacing:-0.32px;color:#2b8cb0">40</div>
<div class="t mono" style="left:89px;top:764.45px;font-size:12.2px;letter-spacing:-0.32px;color:#000">            <span class="k">End If</span></div>
<div class="t mono" style="right:1852px;top:780.45px;font-size:12.2px;letter-spacing:-0.32px;color:#2b8cb0">41</div>
<div class="t mono" style="left:89px;top:780.45px;font-size:12.2px;letter-spacing:-0.32px;color:#000">        <span class="k">End If</span></div>
<div class="t mono" style="right:1852px;top:796.45px;font-size:12.2px;letter-spacing:-0.32px;color:#2b8cb0">42</div>
<div class="t mono" style="left:89px;top:796.45px;font-size:12.2px;letter-spacing:-0.32px;color:#000">        <span class="v">chkReset</span>.Checked = m.Get(<span class="s">&quot;reset&quot;</span>)</div>
<div class="t mono" style="right:1852px;top:812.45px;font-size:12.2px;letter-spacing:-0.32px;color:#2b8cb0">43</div>
<div class="t mono" style="left:89px;top:812.45px;font-size:12.2px;letter-spacing:-0.32px;color:#000">    <span class="k">End If</span></div>
<div class="t mono" style="right:1852px;top:828.45px;font-size:12.2px;letter-spacing:-0.32px;color:#2b8cb0">44</div>
<div class="t mono" style="left:89px;top:828.45px;font-size:12.2px;letter-spacing:-0.32px;color:#000">    <span class="k">If</span> <span class="v">cmbPort</span>.SelectedIndex = <span class="n">-1</span> <span class="k">Then</span> <span class="v">cmbPort</span>.SelectedIndex = <span class="v">cmbPort</span>.Items.Size - <span class="n">1</span></div>
<div class="t mono" style="right:1852px;top:844.45px;font-size:12.2px;letter-spacing:-0.32px;color:#2b8cb0">45</div>
<div class="t mono" style="left:89px;top:844.45px;font-size:12.2px;letter-spacing:-0.32px;color:#000">    <span class="v">udpListener</span>.Initialize2(<span class="s">&quot;udp&quot;</span>, <span class="n">51042</span>, <span class="n">8192</span>, <span class="k">True</span>, <span class="k">True</span>)</div>
<div class="t mono" style="right:1852px;top:860.45px;font-size:12.2px;letter-spacing:-0.32px;color:#2b8cb0">46</div>
<div class="t mono" style="left:89px;top:860.45px;font-size:12.2px;letter-spacing:-0.32px;color:#000"><span class="k">End Sub</span></div>
<div class="t mono" style="right:1852px;top:876.45px;font-size:12.2px;letter-spacing:-0.32px;color:#2b8cb0">47</div>
<div class="t mono" style="left:89px;top:876.45px;font-size:12.2px;letter-spacing:-0.32px;color:#000"></div>
<div class="t mono" style="right:1852px;top:895.45px;font-size:12.2px;letter-spacing:-0.32px;color:#2b8cb0">48</div>
<div class="t mono" style="left:89px;top:895.45px;font-size:12.2px;letter-spacing:-0.32px;color:#000"><span class="k">Sub</span> <span class="b">GetPortsNames</span> <span class="k">As</span> <span class="t2">ResumableSub</span></div>
<div class="t mono" style="right:1852px;top:912.45px;font-size:12.2px;letter-spacing:-0.32px;color:#2b8cb0">49</div>
<div class="t mono" style="left:89px;top:912.45px;font-size:12.2px;letter-spacing:-0.32px;color:#000">    <span class="v">PortsNames</span>.Initialize</div>
<div class="t mono" style="right:1852px;top:928.45px;font-size:12.2px;letter-spacing:-0.32px;color:#2b8cb0">50</div>
<div class="t mono" style="left:89px;top:928.45px;font-size:12.2px;letter-spacing:-0.32px;color:#000">    <span class="k">For Each</span> port <span class="k">As</span> <span class="t2">String</span> <span class="k">In</span> <span class="r">serial</span>.ListPorts</div>
<div class="t mono" style="right:1852px;top:944.45px;font-size:12.2px;letter-spacing:-0.32px;color:#2b8cb0">51</div>
<div class="t mono" style="left:89px;top:944.45px;font-size:12.2px;letter-spacing:-0.32px;color:#000">        <span class="v">PortsNames</span>.Put(port, port) <span class="c">&#x27;default names</span></div>
<div class="t mono" style="right:1852px;top:960.45px;font-size:12.2px;letter-spacing:-0.32px;color:#2b8cb0">52</div>
<div class="t mono" style="left:89px;top:960.45px;font-size:12.2px;letter-spacing:-0.32px;color:#000">    <span class="k">Next</span></div>
<div class="t mono" style="right:1852px;top:976.45px;font-size:12.2px;letter-spacing:-0.32px;color:#2b8cb0">53</div>
<div class="t mono" style="left:89px;top:976.45px;font-size:12.2px;letter-spacing:-0.32px;color:#000">    <span class="k">File</span>.Copy(<span class="k">File</span>.DirAssets, <span class="s">&quot;ListPorts.exe&quot;</span>, <span class="v">DataFolder</span>, <span class="s">&quot;ListPorts.exe&quot;</span>)</div>
<div class="t mono" style="right:1852px;top:992.45px;font-size:12.2px;letter-spacing:-0.32px;color:#2b8cb0">54</div>
<div class="t mono" style="left:89px;top:992.45px;font-size:12.2px;letter-spacing:-0.32px;color:#000">    <span class="k">Dim</span> shl <span class="k">As</span> <span class="t2">Shell</span></div>
<div class="t mono" style="right:1852px;top:1008.45px;font-size:12.2px;letter-spacing:-0.32px;color:#2b8cb0">55</div>
<div class="t mono" style="left:89px;top:1008.45px;font-size:12.2px;letter-spacing:-0.32px;color:#000">    shl.Initialize(<span class="s">&quot;shl&quot;</span>, <span class="k">File</span>.Combine(<span class="v">DataFolder</span>, <span class="s">&quot;ListPorts.exe&quot;</span>), <span class="k">Null</span>)</div>
<div class="t mono" style="right:1852px;top:1024.45px;font-size:12.2px;letter-spacing:-0.32px;color:#2b8cb0">56</div>
<div class="t mono" style="left:89px;top:1024.45px;font-size:12.2px;letter-spacing:-0.32px;color:#000">    shl.Run(<span class="n">5000</span>)</div>
<div class="t mono" style="right:1852px;top:1040.45px;font-size:12.2px;letter-spacing:-0.32px;color:#2b8cb0">57</div>
<div class="t mono" style="left:89px;top:1040.45px;font-size:12.2px;letter-spacing:-0.32px;color:#000">    <span class="k">Wait For</span> shl_ProcessCompleted (Success <span class="k">As</span> <span class="t2">Boolean</span>, ExitCode <span class="k">As</span> <span class="t2">Int</span>, StdOut <span class="k">As</span> <span class="t2">String</span>, StdErr <span class="k">As</span> <span class="t2">String</span>)</div>
<div class="t mono" style="right:1852px;top:1056.45px;font-size:12.2px;letter-spacing:-0.32px;color:#2b8cb0">58</div>
<div class="t mono" style="left:89px;top:1056.45px;font-size:12.2px;letter-spacing:-0.32px;color:#000">    <span class="k">If</span> Success <span class="k">And</span> ExitCode = <span class="n">0</span> <span class="k">Then</span></div>
<div class="t mono" style="right:1852px;top:1072.45px;font-size:12.2px;letter-spacing:-0.32px;color:#2b8cb0">59</div>
<div class="t mono" style="left:89px;top:1072.45px;font-size:12.2px;letter-spacing:-0.32px;color:#000">        <span class="k">For Each</span> line <span class="k">As</span> <span class="t2">String</span> <span class="k">In</span> <span class="k">Regex</span>.Split(<span class="k">CRLF</span>, StdOut)</div>
<div class="t mono" style="right:1852px;top:1088.45px;font-size:12.2px;letter-spacing:-0.32px;color:#2b8cb0">60</div>
<div class="t mono" style="left:89px;top:1088.45px;font-size:12.2px;letter-spacing:-0.32px;color:#000">            <span class="k">Log</span>(line)</div>
<div class="a" style="left:79px;top:136px;width:9px;height:9px;background:#fff;border:1px solid #a8a8a8"></div>
<div class="a" style="left:81px;top:140px;width:5px;height:1px;background:#333"></div>
<div class="a" style="left:83px;top:146px;width:1px;height:51px;background:#a8a8a8"></div>
<div class="a" style="left:83px;top:196px;width:5px;height:1px;background:#a8a8a8"></div>
<div class="a" style="left:79px;top:232px;width:9px;height:9px;background:#fff;border:1px solid #a8a8a8"></div>
<div class="a" style="left:81px;top:236px;width:5px;height:1px;background:#333"></div>
<div class="a" style="left:83px;top:242px;width:1px;height:275px;background:#a8a8a8"></div>
<div class="a" style="left:83px;top:516px;width:5px;height:1px;background:#a8a8a8"></div>
<div class="a" style="left:79px;top:539px;width:9px;height:9px;background:#fff;border:1px solid #a8a8a8"></div>
<div class="a" style="left:81px;top:543px;width:5px;height:1px;background:#333"></div>
<div class="a" style="left:83px;top:549px;width:1px;height:324px;background:#a8a8a8"></div>
<div class="a" style="left:83px;top:872px;width:5px;height:1px;background:#a8a8a8"></div>
<div class="a" style="left:79px;top:895px;width:9px;height:9px;background:#fff;border:1px solid #a8a8a8"></div>
<div class="a" style="left:81px;top:899px;width:5px;height:1px;background:#333"></div>
<div class="a" style="left:83px;top:905px;width:1px;height:199px;background:#a8a8a8"></div>
<svg class="a" style="left:117px;top:386px;" width="168" height="3" viewBox="0 0 168 3"><path d="M0 2.5 L2 0.6 L4 2.6 L6 0.6 L8 2.6 L10 0.6 L12 2.6 L14 0.6 L16 2.6 L18 0.6 L20 2.6 L22 0.6 L24 2.6 L26 0.6 L28 2.6 L30 0.6 L32 2.6 L34 0.6 L36 2.6 L38 0.6 L40 2.6 L42 0.6 L44 2.6 L46 0.6 L48 2.6 L50 0.6 L52 2.6 L54 0.6 L56 2.6 L58 0.6 L60 2.6 L62 0.6 L64 2.6 L66 0.6 L68 2.6 L70 0.6 L72 2.6 L74 0.6 L76 2.6 L78 0.6 L80 2.6 L82 0.6 L84 2.6 L86 0.6 L88 2.6 L90 0.6 L92 2.6 L94 0.6 L96 2.6 L98 0.6 L100 2.6 L102 0.6 L104 2.6 L106 0.6 L108 2.6 L110 0.6 L112 2.6 L114 0.6 L116 2.6 L118 0.6 L120 2.6 L122 0.6 L124 2.6 L126 0.6 L128 2.6 L130 0.6 L132 2.6 L134 0.6 L136 2.6 L138 0.6 L140 2.6 L142 0.6 L144 2.6 L146 0.6 L148 2.6 L150 0.6 L152 2.6 L154 0.6 L156 2.6 L158 0.6 L160 2.6 L162 0.6 L164 2.6 L166 0.6 L168 2.6" fill="none" stroke="#d84c4c" stroke-width="1"/></svg>
<svg class="a" style="left:117px;top:630px;" width="147" height="3" viewBox="0 0 147 3"><path d="M0 2.5 L2 0.6 L4 2.6 L6 0.6 L8 2.6 L10 0.6 L12 2.6 L14 0.6 L16 2.6 L18 0.6 L20 2.6 L22 0.6 L24 2.6 L26 0.6 L28 2.6 L30 0.6 L32 2.6 L34 0.6 L36 2.6 L38 0.6 L40 2.6 L42 0.6 L44 2.6 L46 0.6 L48 2.6 L50 0.6 L52 2.6 L54 0.6 L56 2.6 L58 0.6 L60 2.6 L62 0.6 L64 2.6 L66 0.6 L68 2.6 L70 0.6 L72 2.6 L74 0.6 L76 2.6 L78 0.6 L80 2.6 L82 0.6 L84 2.6 L86 0.6 L88 2.6 L90 0.6 L92 2.6 L94 0.6 L96 2.6 L98 0.6 L100 2.6 L102 0.6 L104 2.6 L106 0.6 L108 2.6 L110 0.6 L112 2.6 L114 0.6 L116 2.6 L118 0.6 L120 2.6 L122 0.6 L124 2.6 L126 0.6 L128 2.6 L130 0.6 L132 2.6 L134 0.6 L136 2.6 L138 0.6 L140 2.6 L142 0.6 L144 2.6 L146 0.6" fill="none" stroke="#d84c4c" stroke-width="1"/></svg>
<svg class="a" style="left:117px;top:938px;" width="301" height="3" viewBox="0 0 301 3"><path d="M0 2.5 L2 0.6 L4 2.6 L6 0.6 L8 2.6 L10 0.6 L12 2.6 L14 0.6 L16 2.6 L18 0.6 L20 2.6 L22 0.6 L24 2.6 L26 0.6 L28 2.6 L30 0.6 L32 2.6 L34 0.6 L36 2.6 L38 0.6 L40 2.6 L42 0.6 L44 2.6 L46 0.6 L48 2.6 L50 0.6 L52 2.6 L54 0.6 L56 2.6 L58 0.6 L60 2.6 L62 0.6 L64 2.6 L66 0.6 L68 2.6 L70 0.6 L72 2.6 L74 0.6 L76 2.6 L78 0.6 L80 2.6 L82 0.6 L84 2.6 L86 0.6 L88 2.6 L90 0.6 L92 2.6 L94 0.6 L96 2.6 L98 0.6 L100 2.6 L102 0.6 L104 2.6 L106 0.6 L108 2.6 L110 0.6 L112 2.6 L114 0.6 L116 2.6 L118 0.6 L120 2.6 L122 0.6 L124 2.6 L126 0.6 L128 2.6 L130 0.6 L132 2.6 L134 0.6 L136 2.6 L138 0.6 L140 2.6 L142 0.6 L144 2.6 L146 0.6 L148 2.6 L150 0.6 L152 2.6 L154 0.6 L156 2.6 L158 0.6 L160 2.6 L162 0.6 L164 2.6 L166 0.6 L168 2.6 L170 0.6 L172 2.6 L174 0.6 L176 2.6 L178 0.6 L180 2.6 L182 0.6 L184 2.6 L186 0.6 L188 2.6 L190 0.6 L192 2.6 L194 0.6 L196 2.6 L198 0.6 L200 2.6 L202 0.6 L204 2.6 L206 0.6 L208 2.6 L210 0.6 L212 2.6 L214 0.6 L216 2.6 L218 0.6 L220 2.6 L222 0.6 L224 2.6 L226 0.6 L228 2.6 L230 0.6 L232 2.6 L234 0.6 L236 2.6 L238 0.6 L240 2.6 L242 0.6 L244 2.6 L246 0.6 L248 2.6 L250 0.6 L252 2.6 L254 0.6 L256 2.6 L258 0.6 L260 2.6 L262 0.6 L264 2.6 L266 0.6 L268 2.6 L270 0.6 L272 2.6 L274 0.6 L276 2.6 L278 0.6 L280 2.6 L282 0.6 L284 2.6 L286 0.6 L288 2.6 L290 0.6 L292 2.6 L294 0.6 L296 2.6 L298 0.6 L300 2.6" fill="none" stroke="#d84c4c" stroke-width="1"/></svg>
<svg class="a" style="left:117px;top:970px;" width="28" height="3" viewBox="0 0 28 3"><path d="M0 2.5 L2 0.6 L4 2.6 L6 0.6 L8 2.6 L10 0.6 L12 2.6 L14 0.6 L16 2.6 L18 0.6 L20 2.6 L22 0.6 L24 2.6 L26 0.6 L28 2.6" fill="none" stroke="#d84c4c" stroke-width="1"/></svg>
<svg class="a" style="left:413px;top:535px;" width="14" height="14" viewBox="0 0 14 14"><path d="M7 3A4.9 4.9 0 1 1 2.3 6.3" fill="none" stroke="#2e2e2e" stroke-width="2"/><path d="M1.8 2.7L8.2 -0.1V5.6z" fill="#2e2e2e"/></svg>
<svg class="a" style="left:322px;top:891px;" width="14" height="14" viewBox="0 0 14 14"><path d="M7 3A4.9 4.9 0 1 1 2.3 6.3" fill="none" stroke="#2e2e2e" stroke-width="2"/><path d="M1.8 2.7L8.2 -0.1V5.6z" fill="#2e2e2e"/></svg>
<svg class="a" style="left:11px;top:634px;" width="14" height="14" viewBox="0 0 14 14"><path d="M7 3A4.9 4.9 0 1 1 2.3 6.3" fill="none" stroke="#2e2e2e" stroke-width="2"/><path d="M1.8 2.7L8.2 -0.1V5.6z" fill="#2e2e2e"/></svg>
<svg class="a" style="left:1412px;top:93px;" width="6" height="8" viewBox="0 0 6 8"><path d="M5 0V8L0 4z" fill="#c8c8c8"/></svg>
<svg class="a" style="left:1429px;top:93px;" width="6" height="8" viewBox="0 0 6 8"><path d="M0 0V8L5 4z" fill="#c8c8c8"/></svg>
<svg class="a" style="left:1443px;top:96px;" width="9" height="5" viewBox="0 0 9 5"><path d="M0 0H9L4.5 5z" fill="#888"/></svg>
<div class="a" style="left:1462px;top:87px;width:451px;height:1014px;background:#f6f6f6;border:1px solid #d4d4d4"></div>
<div class="a" style="left:1463px;top:88px;width:449px;height:21px;background:#f2f2f2"></div>
<div class="t " style="left:1468.5px;top:93.18px;font-size:11.6px;color:#2b2b38;">Libraries Manager</div>
<svg class="a" style="left:1571px;top:97px;" width="288" height="5" viewBox="0 0 288 5"><defs><pattern id="dp" width="4" height="4" patternUnits="userSpaceOnUse"><rect x="0" y="0" width="1" height="1" fill="#8e8e8e"/><rect x="2" y="2" width="1" height="1" fill="#8e8e8e"/></pattern></defs><rect x="0" y="0" width="288" height="5" fill="url(#dp)"/></svg>
<svg class="a" style="left:1867px;top:98px;" width="9" height="5" viewBox="0 0 9 5"><path d="M0 0H9L4.5 5z" fill="#333"/></svg>
<svg class="a" style="left:1883px;top:92px;" width="9" height="13" viewBox="0 0 9 13"><path d="M2 1H7M2.5 1V7.5H6.5V1M1 7.5H8M4.5 7.5V12" fill="none" stroke="#333" stroke-width="1.2"/></svg>
<svg class="a" style="left:1898px;top:94px;" width="10" height="10" viewBox="0 0 10 10"><path d="M0.8 0.8L9.2 9.2M9.2 0.8L0.8 9.2" stroke="#333" stroke-width="1.3"/></svg>
<div class="a" style="left:1473px;top:115px;width:430px;height:21px;background:#fff;border:1px solid #dcdcdc;border-top:1px solid #b9b9b9"></div>
<div class="t " style="left:1478.4px;top:119.78px;font-size:11.6px;color:#7a7a7a;font-style:italic">Filtruj</div>
<svg class="a" style="left:1885px;top:118px;" width="14" height="14" viewBox="0 0 14 14"><circle cx="8.3" cy="5.6" r="3.9" fill="none" stroke="#2c5f9e" stroke-width="1.5"/><line x1="5.6" y1="8.4" x2="1.6" y2="12.4" stroke="#2c5f9e" stroke-width="1.9"/></svg>
<div class="a" style="left:1463px;top:141px;width:450px;height:960px;background:#f8f8f8;border:1px solid #b3b3b3"></div>
<div class="a" style="left:1464px;top:142px;width:432px;height:19px;background:#f0f0f0"></div>
<div class="a" style="left:1464px;top:161px;width:432px;height:1px;background:#d6d6d6"></div>
<div class="a" style="left:1498px;top:142px;width:1px;height:19px;background:#dedede"></div>
<div class="a" style="left:1638px;top:142px;width:1px;height:19px;background:#dedede"></div>
<div class="a" style="left:1693px;top:142px;width:1px;height:19px;background:#dedede"></div>
<div class="a" style="left:1790px;top:142px;width:1px;height:19px;background:#dedede"></div>
<div class="a" style="left:1870px;top:142px;width:1px;height:19px;background:#dedede"></div>
<div class="t " style="left:1506.5px;top:145.98px;font-size:11.6px;color:#111;">Nazwa</div>
<div class="t " style="left:1648.5px;top:145.98px;font-size:11.6px;color:#111;">Wersja</div>
<div class="t " style="left:1713.8px;top:145.98px;font-size:11.6px;color:#111;">Tryb online</div>
<div class="t " style="left:1798.4px;top:145.98px;font-size:11.6px;color:#111;">Ścieżka</div>
<div class="a" style="left:1870px;top:142px;width:26px;height:19px;overflow:hidden">
<div class="t" style="left:8.3px;top:3.98px;font-size:11.6px;color:#111">Platforma</div>
</div>
<div class="a" style="left:1464px;top:162px;width:432px;height:922px;overflow:hidden">
<div class="a" style="left:0;top:0px;width:432px;height:23px;background:#f9f9f9;border-bottom:1px solid #efefef"></div>
<div class="a" style="left:34px;top:0px;width:1px;height:23px;background:#f1f1f1"></div>
<div class="a" style="left:174px;top:0px;width:1px;height:23px;background:#f1f1f1"></div>
<div class="a" style="left:229px;top:0px;width:1px;height:23px;background:#f1f1f1"></div>
<div class="a" style="left:326px;top:0px;width:1px;height:23px;background:#f1f1f1"></div>
<div class="a" style="left:406px;top:0px;width:1px;height:23px;background:#f1f1f1"></div>
<div class="a" style="left:10px;top:4px;width:14px;height:14px;background:#fff;border:1px solid #6a6a6a"></div>
<svg class="a" style="left:12px;top:6px" width="10" height="10" viewBox="0 0 10 10"><path d="M1 5.2L3.8 8.2L9 1.5" fill="none" stroke="#777" stroke-width="1.3"/></svg>
<div class="t" style="left:42.5px;top:5.88px;font-size:11.6px;color:#2b2b2b;">B4XCollections</div>
<div class="t" style="left:162px;width:80px;text-align:center;top:5.88px;font-size:11.6px;color:#111;">1.15</div>
<div class="t" style="left:239px;width:80px;text-align:center;top:5.88px;font-size:11.6px;color:#2a2ab6;">1.15</div>
<div class="t" style="left:334.4000000000001px;top:5.88px;font-size:11.6px;color:#111;">Internal</div>
<div class="t" style="left:414.29999999999995px;top:5.88px;font-size:11.6px;color:#111;">B4A</div>
<div class="a" style="left:0;top:23px;width:432px;height:23px;background:#f9f9f9;border-bottom:1px solid #efefef"></div>
<div class="a" style="left:34px;top:23px;width:1px;height:23px;background:#f1f1f1"></div>
<div class="a" style="left:174px;top:23px;width:1px;height:23px;background:#f1f1f1"></div>
<div class="a" style="left:229px;top:23px;width:1px;height:23px;background:#f1f1f1"></div>
<div class="a" style="left:326px;top:23px;width:1px;height:23px;background:#f1f1f1"></div>
<div class="a" style="left:406px;top:23px;width:1px;height:23px;background:#f1f1f1"></div>
<div class="a" style="left:10px;top:27px;width:14px;height:14px;background:#fff;border:1px solid #6a6a6a"></div>
<svg class="a" style="left:12px;top:29px" width="10" height="10" viewBox="0 0 10 10"><path d="M1 5.2L3.8 8.2L9 1.5" fill="none" stroke="#777" stroke-width="1.3"/></svg>
<div class="t" style="left:42.5px;top:28.88px;font-size:11.6px;color:#2b2b2b;">JavaObject</div>
<div class="t" style="left:162px;width:80px;text-align:center;top:28.88px;font-size:11.6px;color:#111;">2.06</div>
<div class="t" style="left:239px;width:80px;text-align:center;top:28.88px;font-size:11.6px;color:#2a2ab6;">2.06</div>
<div class="t" style="left:334.4000000000001px;top:28.88px;font-size:11.6px;color:#111;">Internal</div>
<div class="t" style="left:414.29999999999995px;top:28.88px;font-size:11.6px;color:#111;">B4J</div>
<div class="a" style="left:0;top:46px;width:432px;height:23px;background:#f9f9f9;border-bottom:1px solid #efefef"></div>
<div class="a" style="left:34px;top:46px;width:1px;height:23px;background:#f1f1f1"></div>
<div class="a" style="left:174px;top:46px;width:1px;height:23px;background:#f1f1f1"></div>
<div class="a" style="left:229px;top:46px;width:1px;height:23px;background:#f1f1f1"></div>
<div class="a" style="left:326px;top:46px;width:1px;height:23px;background:#f1f1f1"></div>
<div class="a" style="left:406px;top:46px;width:1px;height:23px;background:#f1f1f1"></div>
<div class="a" style="left:10px;top:50px;width:14px;height:14px;background:#fff;border:1px solid #6a6a6a"></div>
<svg class="a" style="left:12px;top:52px" width="10" height="10" viewBox="0 0 10 10"><path d="M1 5.2L3.8 8.2L9 1.5" fill="none" stroke="#777" stroke-width="1.3"/></svg>
<div class="t" style="left:42.5px;top:51.88px;font-size:11.6px;color:#2b2b2b;">jCore</div>
<div class="t" style="left:162px;width:80px;text-align:center;top:51.88px;font-size:11.6px;color:#111;">10.20</div>
<div class="t" style="left:239px;width:80px;text-align:center;top:51.88px;font-size:11.6px;color:#2a2ab6;font-weight:bold;font-size:12px">10.30</div>
<div class="t" style="left:334.4000000000001px;top:51.88px;font-size:11.6px;color:#111;">Internal</div>
<div class="t" style="left:414.29999999999995px;top:51.88px;font-size:11.6px;color:#111;">B4J</div>
<div class="a" style="left:0;top:69px;width:432px;height:23px;background:#f9f9f9;border-bottom:1px solid #efefef"></div>
<div class="a" style="left:34px;top:69px;width:1px;height:23px;background:#f1f1f1"></div>
<div class="a" style="left:174px;top:69px;width:1px;height:23px;background:#f1f1f1"></div>
<div class="a" style="left:229px;top:69px;width:1px;height:23px;background:#f1f1f1"></div>
<div class="a" style="left:326px;top:69px;width:1px;height:23px;background:#f1f1f1"></div>
<div class="a" style="left:406px;top:69px;width:1px;height:23px;background:#f1f1f1"></div>
<div class="a" style="left:10px;top:73px;width:14px;height:14px;background:#fff;border:1px solid #6a6a6a"></div>
<svg class="a" style="left:12px;top:75px" width="10" height="10" viewBox="0 0 10 10"><path d="M1 5.2L3.8 8.2L9 1.5" fill="none" stroke="#777" stroke-width="1.3"/></svg>
<div class="t" style="left:42.5px;top:74.88px;font-size:11.6px;color:#2b2b2b;">jFX</div>
<div class="t" style="left:162px;width:80px;text-align:center;top:74.88px;font-size:11.6px;color:#111;">10.20</div>
<div class="t" style="left:239px;width:80px;text-align:center;top:74.88px;font-size:11.6px;color:#2a2ab6;">10.20</div>
<div class="t" style="left:334.4000000000001px;top:74.88px;font-size:11.6px;color:#111;">Internal</div>
<div class="t" style="left:414.29999999999995px;top:74.88px;font-size:11.6px;color:#111;">B4J</div>
<div class="a" style="left:0;top:92px;width:432px;height:23px;background:#f9f9f9;border-bottom:1px solid #efefef"></div>
<div class="a" style="left:34px;top:92px;width:1px;height:23px;background:#f1f1f1"></div>
<div class="a" style="left:174px;top:92px;width:1px;height:23px;background:#f1f1f1"></div>
<div class="a" style="left:229px;top:92px;width:1px;height:23px;background:#f1f1f1"></div>
<div class="a" style="left:326px;top:92px;width:1px;height:23px;background:#f1f1f1"></div>
<div class="a" style="left:406px;top:92px;width:1px;height:23px;background:#f1f1f1"></div>
<div class="a" style="left:10px;top:96px;width:14px;height:14px;background:#fff;border:1px solid #6a6a6a"></div>
<svg class="a" style="left:12px;top:98px" width="10" height="10" viewBox="0 0 10 10"><path d="M1 5.2L3.8 8.2L9 1.5" fill="none" stroke="#777" stroke-width="1.3"/></svg>
<div class="t" style="left:42.5px;top:97.88px;font-size:11.6px;color:#2b2b2b;">jNetwork</div>
<div class="t" style="left:162px;width:80px;text-align:center;top:97.88px;font-size:11.6px;color:#111;">1.21</div>
<div class="t" style="left:239px;width:80px;text-align:center;top:97.88px;font-size:11.6px;color:#2a2ab6;">1.21</div>
<div class="t" style="left:334.4000000000001px;top:97.88px;font-size:11.6px;color:#111;">Internal</div>
<div class="t" style="left:414.29999999999995px;top:97.88px;font-size:11.6px;color:#111;">B4J</div>
<div class="a" style="left:0;top:115px;width:432px;height:23px;background:#f9f9f9;border-bottom:1px solid #efefef"></div>
<div class="a" style="left:34px;top:115px;width:1px;height:23px;background:#f1f1f1"></div>
<div class="a" style="left:174px;top:115px;width:1px;height:23px;background:#f1f1f1"></div>
<div class="a" style="left:229px;top:115px;width:1px;height:23px;background:#f1f1f1"></div>
<div class="a" style="left:326px;top:115px;width:1px;height:23px;background:#f1f1f1"></div>
<div class="a" style="left:406px;top:115px;width:1px;height:23px;background:#f1f1f1"></div>
<div class="a" style="left:10px;top:119px;width:14px;height:14px;background:#fff;border:1px solid #6a6a6a"></div>
<svg class="a" style="left:12px;top:121px" width="10" height="10" viewBox="0 0 10 10"><path d="M1 5.2L3.8 8.2L9 1.5" fill="none" stroke="#777" stroke-width="1.3"/></svg>
<div class="t" style="left:42.5px;top:120.88px;font-size:11.6px;color:#2b2b2b;">jRandomAccessFile</div>
<div class="t" style="left:162px;width:80px;text-align:center;top:120.88px;font-size:11.6px;color:#111;">2.35</div>
<div class="t" style="left:239px;width:80px;text-align:center;top:120.88px;font-size:11.6px;color:#2a2ab6;">2.35</div>
<div class="t" style="left:334.4000000000001px;top:120.88px;font-size:11.6px;color:#111;">Internal</div>
<div class="t" style="left:414.29999999999995px;top:120.88px;font-size:11.6px;color:#111;">B4J</div>
<div class="a" style="left:0;top:138px;width:432px;height:23px;background:#f9f9f9;border-bottom:1px solid #efefef"></div>
<div class="a" style="left:34px;top:138px;width:1px;height:23px;background:#f1f1f1"></div>
<div class="a" style="left:174px;top:138px;width:1px;height:23px;background:#f1f1f1"></div>
<div class="a" style="left:229px;top:138px;width:1px;height:23px;background:#f1f1f1"></div>
<div class="a" style="left:326px;top:138px;width:1px;height:23px;background:#f1f1f1"></div>
<div class="a" style="left:406px;top:138px;width:1px;height:23px;background:#f1f1f1"></div>
<div class="a" style="left:10px;top:142px;width:14px;height:14px;background:#fff;border:1px solid #6a6a6a"></div>
<svg class="a" style="left:12px;top:144px" width="10" height="10" viewBox="0 0 10 10"><path d="M1 5.2L3.8 8.2L9 1.5" fill="none" stroke="#777" stroke-width="1.3"/></svg>
<div class="t" style="left:42.5px;top:143.88px;font-size:11.6px;color:#2b2b2b;">jShell</div>
<div class="t" style="left:162px;width:80px;text-align:center;top:143.88px;font-size:11.6px;color:#111;">1.55</div>
<div class="t" style="left:239px;width:80px;text-align:center;top:143.88px;font-size:11.6px;color:#2a2ab6;font-weight:bold;font-size:12px">1.56</div>
<div class="t" style="left:334.4000000000001px;top:143.88px;font-size:11.6px;color:#111;">Internal</div>
<div class="t" style="left:414.29999999999995px;top:143.88px;font-size:11.6px;color:#111;">B4J</div>
<div class="a" style="left:0;top:161px;width:432px;height:23px;background:#f9f9f9;border-bottom:1px solid #efefef"></div>
<div class="a" style="left:34px;top:161px;width:1px;height:23px;background:#f1f1f1"></div>
<div class="a" style="left:174px;top:161px;width:1px;height:23px;background:#f1f1f1"></div>
<div class="a" style="left:229px;top:161px;width:1px;height:23px;background:#f1f1f1"></div>
<div class="a" style="left:326px;top:161px;width:1px;height:23px;background:#f1f1f1"></div>
<div class="a" style="left:406px;top:161px;width:1px;height:23px;background:#f1f1f1"></div>
<div class="a" style="left:10px;top:165px;width:14px;height:14px;background:#fff;border:1px solid #6a6a6a"></div>
<div class="t" style="left:42.5px;top:166.88px;font-size:11.6px;color:#2b2b2b;">B4XDrawer</div>
<div class="t" style="left:239px;width:80px;text-align:center;top:166.88px;font-size:11.6px;color:#2a2ab6;">1.55</div>
<div class="t" style="left:334.4000000000001px;top:166.88px;font-size:11.6px;color:#111;">Internal</div>
<div class="a" style="left:0;top:184px;width:432px;height:23px;background:#f9f9f9;border-bottom:1px solid #efefef"></div>
<div class="a" style="left:34px;top:184px;width:1px;height:23px;background:#f1f1f1"></div>
<div class="a" style="left:174px;top:184px;width:1px;height:23px;background:#f1f1f1"></div>
<div class="a" style="left:229px;top:184px;width:1px;height:23px;background:#f1f1f1"></div>
<div class="a" style="left:326px;top:184px;width:1px;height:23px;background:#f1f1f1"></div>
<div class="a" style="left:406px;top:184px;width:1px;height:23px;background:#f1f1f1"></div>
<div class="a" style="left:10px;top:188px;width:14px;height:14px;background:#fff;border:1px solid #6a6a6a"></div>
<div class="t" style="left:42.5px;top:189.88px;font-size:11.6px;color:#2b2b2b;">B4XFormatter</div>
<div class="t" style="left:239px;width:80px;text-align:center;top:189.88px;font-size:11.6px;color:#2a2ab6;">1.04</div>
<div class="t" style="left:334.4000000000001px;top:189.88px;font-size:11.6px;color:#111;">Internal</div>
<div class="a" style="left:0;top:207px;width:432px;height:23px;background:#f9f9f9;border-bottom:1px solid #efefef"></div>
<div class="a" style="left:34px;top:207px;width:1px;height:23px;background:#f1f1f1"></div>
<div class="a" style="left:174px;top:207px;width:1px;height:23px;background:#f1f1f1"></div>
<div class="a" style="left:229px;top:207px;width:1px;height:23px;background:#f1f1f1"></div>
<div class="a" style="left:326px;top:207px;width:1px;height:23px;background:#f1f1f1"></div>
<div class="a" style="left:406px;top:207px;width:1px;height:23px;background:#f1f1f1"></div>
<div class="a" style="left:10px;top:211px;width:14px;height:14px;background:#fff;border:1px solid #6a6a6a"></div>
<div class="t" style="left:42.5px;top:212.88px;font-size:11.6px;color:#2b2b2b;">B4XPages</div>
<div class="t" style="left:239px;width:80px;text-align:center;top:212.88px;font-size:11.6px;color:#2a2ab6;">1.12</div>
<div class="t" style="left:334.4000000000001px;top:212.88px;font-size:11.6px;color:#111;">Internal</div>
<div class="a" style="left:0;top:230px;width:432px;height:23px;background:#f9f9f9;border-bottom:1px solid #efefef"></div>
<div class="a" style="left:34px;top:230px;width:1px;height:23px;background:#f1f1f1"></div>
<div class="a" style="left:174px;top:230px;width:1px;height:23px;background:#f1f1f1"></div>
<div class="a" style="left:229px;top:230px;width:1px;height:23px;background:#f1f1f1"></div>
<div class="a" style="left:326px;top:230px;width:1px;height:23px;background:#f1f1f1"></div>
<div class="a" style="left:406px;top:230px;width:1px;height:23px;background:#f1f1f1"></div>
<div class="a" style="left:10px;top:234px;width:14px;height:14px;background:#fff;border:1px solid #6a6a6a"></div>
<div class="t" style="left:42.5px;top:235.88px;font-size:11.6px;color:#2b2b2b;">B4XPreferencesDialo</div>
<div class="t" style="left:239px;width:80px;text-align:center;top:235.88px;font-size:11.6px;color:#2a2ab6;">1.75</div>
<div class="t" style="left:334.4000000000001px;top:235.88px;font-size:11.6px;color:#111;">Internal</div>
<div class="a" style="left:0;top:253px;width:432px;height:23px;background:#f9f9f9;border-bottom:1px solid #efefef"></div>
<div class="a" style="left:34px;top:253px;width:1px;height:23px;background:#f1f1f1"></div>
<div class="a" style="left:174px;top:253px;width:1px;height:23px;background:#f1f1f1"></div>
<div class="a" style="left:229px;top:253px;width:1px;height:23px;background:#f1f1f1"></div>
<div class="a" style="left:326px;top:253px;width:1px;height:23px;background:#f1f1f1"></div>
<div class="a" style="left:406px;top:253px;width:1px;height:23px;background:#f1f1f1"></div>
<div class="a" style="left:10px;top:257px;width:14px;height:14px;background:#fff;border:1px solid #6a6a6a"></div>
<div class="t" style="left:42.5px;top:258.88px;font-size:11.6px;color:#2b2b2b;">B4XTable</div>
<div class="t" style="left:239px;width:80px;text-align:center;top:258.88px;font-size:11.6px;color:#2a2ab6;">1.24</div>
<div class="t" style="left:334.4000000000001px;top:258.88px;font-size:11.6px;color:#111;">Internal</div>
<div class="a" style="left:0;top:276px;width:432px;height:23px;background:#f9f9f9;border-bottom:1px solid #efefef"></div>
<div class="a" style="left:34px;top:276px;width:1px;height:23px;background:#f1f1f1"></div>
<div class="a" style="left:174px;top:276px;width:1px;height:23px;background:#f1f1f1"></div>
<div class="a" style="left:229px;top:276px;width:1px;height:23px;background:#f1f1f1"></div>
<div class="a" style="left:326px;top:276px;width:1px;height:23px;background:#f1f1f1"></div>
<div class="a" style="left:406px;top:276px;width:1px;height:23px;background:#f1f1f1"></div>
<div class="a" style="left:10px;top:280px;width:14px;height:14px;background:#fff;border:1px solid #6a6a6a"></div>
<div class="t" style="left:42.5px;top:281.88px;font-size:11.6px;color:#2b2b2b;">B4XTurtle</div>
<div class="t" style="left:239px;width:80px;text-align:center;top:281.88px;font-size:11.6px;color:#2a2ab6;">1.06</div>
<div class="t" style="left:334.4000000000001px;top:281.88px;font-size:11.6px;color:#111;">Internal</div>
<div class="a" style="left:0;top:299px;width:432px;height:23px;background:#f9f9f9;border-bottom:1px solid #efefef"></div>
<div class="a" style="left:34px;top:299px;width:1px;height:23px;background:#f1f1f1"></div>
<div class="a" style="left:174px;top:299px;width:1px;height:23px;background:#f1f1f1"></div>
<div class="a" style="left:229px;top:299px;width:1px;height:23px;background:#f1f1f1"></div>
<div class="a" style="left:326px;top:299px;width:1px;height:23px;background:#f1f1f1"></div>
<div class="a" style="left:406px;top:299px;width:1px;height:23px;background:#f1f1f1"></div>
<div class="a" style="left:10px;top:303px;width:14px;height:14px;background:#fff;border:1px solid #6a6a6a"></div>
<div class="t" style="left:42.5px;top:304.88px;font-size:11.6px;color:#2b2b2b;">BCTextEngine</div>
<div class="t" style="left:239px;width:80px;text-align:center;top:304.88px;font-size:11.6px;color:#2a2ab6;">1.96</div>
<div class="t" style="left:334.4000000000001px;top:304.88px;font-size:11.6px;color:#111;">Internal</div>
<div class="a" style="left:0;top:322px;width:432px;height:23px;background:#f9f9f9;border-bottom:1px solid #efefef"></div>
<div class="a" style="left:34px;top:322px;width:1px;height:23px;background:#f1f1f1"></div>
<div class="a" style="left:174px;top:322px;width:1px;height:23px;background:#f1f1f1"></div>
<div class="a" style="left:229px;top:322px;width:1px;height:23px;background:#f1f1f1"></div>
<div class="a" style="left:326px;top:322px;width:1px;height:23px;background:#f1f1f1"></div>
<div class="a" style="left:406px;top:322px;width:1px;height:23px;background:#f1f1f1"></div>
<div class="a" style="left:10px;top:326px;width:14px;height:14px;background:#fff;border:1px solid #6a6a6a"></div>
<div class="t" style="left:42.5px;top:327.88px;font-size:11.6px;color:#2b2b2b;">BCToast</div>
<div class="t" style="left:239px;width:80px;text-align:center;top:327.88px;font-size:11.6px;color:#2a2ab6;">1.01</div>
<div class="t" style="left:334.4000000000001px;top:327.88px;font-size:11.6px;color:#111;">Internal</div>
<div class="a" style="left:0;top:345px;width:432px;height:23px;background:#f9f9f9;border-bottom:1px solid #efefef"></div>
<div class="a" style="left:34px;top:345px;width:1px;height:23px;background:#f1f1f1"></div>
<div class="a" style="left:174px;top:345px;width:1px;height:23px;background:#f1f1f1"></div>
<div class="a" style="left:229px;top:345px;width:1px;height:23px;background:#f1f1f1"></div>
<div class="a" style="left:326px;top:345px;width:1px;height:23px;background:#f1f1f1"></div>
<div class="a" style="left:406px;top:345px;width:1px;height:23px;background:#f1f1f1"></div>
<div class="a" style="left:10px;top:349px;width:14px;height:14px;background:#fff;border:1px solid #6a6a6a"></div>
<div class="t" style="left:42.5px;top:350.88px;font-size:11.6px;color:#2b2b2b;">ByteConverter</div>
<div class="t" style="left:239px;width:80px;text-align:center;top:350.88px;font-size:11.6px;color:#2a2ab6;">1.10</div>
<div class="t" style="left:334.4000000000001px;top:350.88px;font-size:11.6px;color:#111;">Internal</div>
<div class="a" style="left:0;top:368px;width:432px;height:23px;background:#f9f9f9;border-bottom:1px solid #efefef"></div>
<div class="a" style="left:34px;top:368px;width:1px;height:23px;background:#f1f1f1"></div>
<div class="a" style="left:174px;top:368px;width:1px;height:23px;background:#f1f1f1"></div>
<div class="a" style="left:229px;top:368px;width:1px;height:23px;background:#f1f1f1"></div>
<div class="a" style="left:326px;top:368px;width:1px;height:23px;background:#f1f1f1"></div>
<div class="a" style="left:406px;top:368px;width:1px;height:23px;background:#f1f1f1"></div>
<div class="a" style="left:10px;top:372px;width:14px;height:14px;background:#fff;border:1px solid #6a6a6a"></div>
<div class="t" style="left:42.5px;top:373.88px;font-size:11.6px;color:#2b2b2b;">CSSUtils</div>
<div class="t" style="left:239px;width:80px;text-align:center;top:373.88px;font-size:11.6px;color:#2a2ab6;">1.20</div>
<div class="t" style="left:334.4000000000001px;top:373.88px;font-size:11.6px;color:#111;">Internal</div>
<div class="a" style="left:0;top:391px;width:432px;height:23px;background:#f9f9f9;border-bottom:1px solid #efefef"></div>
<div class="a" style="left:34px;top:391px;width:1px;height:23px;background:#f1f1f1"></div>
<div class="a" style="left:174px;top:391px;width:1px;height:23px;background:#f1f1f1"></div>
<div class="a" style="left:229px;top:391px;width:1px;height:23px;background:#f1f1f1"></div>
<div class="a" style="left:326px;top:391px;width:1px;height:23px;background:#f1f1f1"></div>
<div class="a" style="left:406px;top:391px;width:1px;height:23px;background:#f1f1f1"></div>
<div class="a" style="left:10px;top:395px;width:14px;height:14px;background:#fff;border:1px solid #6a6a6a"></div>
<div class="t" style="left:42.5px;top:396.88px;font-size:11.6px;color:#2b2b2b;">DesignerUtils</div>
<div class="t" style="left:239px;width:80px;text-align:center;top:396.88px;font-size:11.6px;color:#2a2ab6;">1.04</div>
<div class="t" style="left:334.4000000000001px;top:396.88px;font-size:11.6px;color:#111;">Internal</div>
<div class="a" style="left:0;top:414px;width:432px;height:23px;background:#f9f9f9;border-bottom:1px solid #efefef"></div>
<div class="a" style="left:34px;top:414px;width:1px;height:23px;background:#f1f1f1"></div>
<div class="a" style="left:174px;top:414px;width:1px;height:23px;background:#f1f1f1"></div>
<div class="a" style="left:229px;top:414px;width:1px;height:23px;background:#f1f1f1"></div>
<div class="a" style="left:326px;top:414px;width:1px;height:23px;background:#f1f1f1"></div>
<div class="a" style="left:406px;top:414px;width:1px;height:23px;background:#f1f1f1"></div>
<div class="a" style="left:10px;top:418px;width:14px;height:14px;background:#fff;border:1px solid #6a6a6a"></div>
<div class="t" style="left:42.5px;top:419.88px;font-size:11.6px;color:#2b2b2b;">jB4XEncryption</div>
<div class="t" style="left:239px;width:80px;text-align:center;top:419.88px;font-size:11.6px;color:#2a2ab6;">1.00</div>
<div class="t" style="left:334.4000000000001px;top:419.88px;font-size:11.6px;color:#111;">Internal</div>
<div class="a" style="left:0;top:437px;width:432px;height:23px;background:#f9f9f9;border-bottom:1px solid #efefef"></div>
<div class="a" style="left:34px;top:437px;width:1px;height:23px;background:#f1f1f1"></div>
<div class="a" style="left:174px;top:437px;width:1px;height:23px;background:#f1f1f1"></div>
<div class="a" style="left:229px;top:437px;width:1px;height:23px;background:#f1f1f1"></div>
<div class="a" style="left:326px;top:437px;width:1px;height:23px;background:#f1f1f1"></div>
<div class="a" style="left:406px;top:437px;width:1px;height:23px;background:#f1f1f1"></div>
<div class="a" style="left:10px;top:441px;width:14px;height:14px;background:#fff;border:1px solid #6a6a6a"></div>
<div class="t" style="left:42.5px;top:442.88px;font-size:11.6px;color:#2b2b2b;">jBitmapCreator</div>
<div class="t" style="left:239px;width:80px;text-align:center;top:442.88px;font-size:11.6px;color:#2a2ab6;">4.73</div>
<div class="t" style="left:334.4000000000001px;top:442.88px;font-size:11.6px;color:#111;">Internal</div>
<div class="a" style="left:0;top:460px;width:432px;height:23px;background:#f9f9f9;border-bottom:1px solid #efefef"></div>
<div class="a" style="left:34px;top:460px;width:1px;height:23px;background:#f1f1f1"></div>
<div class="a" style="left:174px;top:460px;width:1px;height:23px;background:#f1f1f1"></div>
<div class="a" style="left:229px;top:460px;width:1px;height:23px;background:#f1f1f1"></div>
<div class="a" style="left:326px;top:460px;width:1px;height:23px;background:#f1f1f1"></div>
<div class="a" style="left:406px;top:460px;width:1px;height:23px;background:#f1f1f1"></div>
<div class="a" style="left:10px;top:464px;width:14px;height:14px;background:#fff;border:1px solid #6a6a6a"></div>
<div class="t" style="left:42.5px;top:465.88px;font-size:11.6px;color:#2b2b2b;">jControlsFX</div>
<div class="t" style="left:239px;width:80px;text-align:center;top:465.88px;font-size:11.6px;color:#2a2ab6;">1.50</div>
<div class="t" style="left:334.4000000000001px;top:465.88px;font-size:11.6px;color:#111;">Internal</div>
<div class="a" style="left:0;top:483px;width:432px;height:23px;background:#f9f9f9;border-bottom:1px solid #efefef"></div>
<div class="a" style="left:34px;top:483px;width:1px;height:23px;background:#f1f1f1"></div>
<div class="a" style="left:174px;top:483px;width:1px;height:23px;background:#f1f1f1"></div>
<div class="a" style="left:229px;top:483px;width:1px;height:23px;background:#f1f1f1"></div>
<div class="a" style="left:326px;top:483px;width:1px;height:23px;background:#f1f1f1"></div>
<div class="a" style="left:406px;top:483px;width:1px;height:23px;background:#f1f1f1"></div>
<div class="a" style="left:10px;top:487px;width:14px;height:14px;background:#fff;border:1px solid #6a6a6a"></div>
<div class="t" style="left:42.5px;top:488.88px;font-size:11.6px;color:#2b2b2b;">jControlsFX9</div>
<div class="t" style="left:239px;width:80px;text-align:center;top:488.88px;font-size:11.6px;color:#2a2ab6;">1.51</div>
<div class="t" style="left:334.4000000000001px;top:488.88px;font-size:11.6px;color:#111;">Internal</div>
<div class="a" style="left:0;top:506px;width:432px;height:23px;background:#f9f9f9;border-bottom:1px solid #efefef"></div>
<div class="a" style="left:34px;top:506px;width:1px;height:23px;background:#f1f1f1"></div>
<div class="a" style="left:174px;top:506px;width:1px;height:23px;background:#f1f1f1"></div>
<div class="a" style="left:229px;top:506px;width:1px;height:23px;background:#f1f1f1"></div>
<div class="a" style="left:326px;top:506px;width:1px;height:23px;background:#f1f1f1"></div>
<div class="a" style="left:406px;top:506px;width:1px;height:23px;background:#f1f1f1"></div>
<div class="a" style="left:10px;top:510px;width:14px;height:14px;background:#fff;border:1px solid #6a6a6a"></div>
<div class="t" style="left:42.5px;top:511.88px;font-size:11.6px;color:#2b2b2b;">jDateUtils</div>
<div class="t" style="left:239px;width:80px;text-align:center;top:511.88px;font-size:11.6px;color:#2a2ab6;">1.05</div>
<div class="t" style="left:334.4000000000001px;top:511.88px;font-size:11.6px;color:#111;">Internal</div>
<div class="a" style="left:0;top:529px;width:432px;height:23px;background:#f9f9f9;border-bottom:1px solid #efefef"></div>
<div class="a" style="left:34px;top:529px;width:1px;height:23px;background:#f1f1f1"></div>
<div class="a" style="left:174px;top:529px;width:1px;height:23px;background:#f1f1f1"></div>
<div class="a" style="left:229px;top:529px;width:1px;height:23px;background:#f1f1f1"></div>
<div class="a" style="left:326px;top:529px;width:1px;height:23px;background:#f1f1f1"></div>
<div class="a" style="left:406px;top:529px;width:1px;height:23px;background:#f1f1f1"></div>
<div class="a" style="left:10px;top:533px;width:14px;height:14px;background:#fff;border:1px solid #6a6a6a"></div>
<div class="t" style="left:42.5px;top:534.88px;font-size:11.6px;color:#2b2b2b;">jGameViewHelper</div>
<div class="t" style="left:239px;width:80px;text-align:center;top:534.88px;font-size:11.6px;color:#2a2ab6;">1.03</div>
<div class="t" style="left:334.4000000000001px;top:534.88px;font-size:11.6px;color:#111;">Internal</div>
<div class="a" style="left:0;top:552px;width:432px;height:23px;background:#ececec;border-bottom:1px solid #efefef"></div>
<div class="a" style="left:34px;top:552px;width:1px;height:23px;background:#f1f1f1"></div>
<div class="a" style="left:174px;top:552px;width:1px;height:23px;background:#f1f1f1"></div>
<div class="a" style="left:229px;top:552px;width:1px;height:23px;background:#f1f1f1"></div>
<div class="a" style="left:326px;top:552px;width:1px;height:23px;background:#f1f1f1"></div>
<div class="a" style="left:406px;top:552px;width:1px;height:23px;background:#f1f1f1"></div>
<div class="a" style="left:10px;top:556px;width:14px;height:14px;background:#fff;border:1px solid #6a6a6a"></div>
<div class="t" style="left:42.5px;top:557.88px;font-size:11.6px;color:#2b2b2b;">jMQTT</div>
<div class="t" style="left:239px;width:80px;text-align:center;top:557.88px;font-size:11.6px;color:#2a2ab6;">1.26</div>
<div class="t" style="left:334.4000000000001px;top:557.88px;font-size:11.6px;color:#111;">Internal</div>
<div class="a" style="left:0;top:575px;width:432px;height:23px;background:#f9f9f9;border-bottom:1px solid #efefef"></div>
<div class="a" style="left:34px;top:575px;width:1px;height:23px;background:#f1f1f1"></div>
<div class="a" style="left:174px;top:575px;width:1px;height:23px;background:#f1f1f1"></div>
<div class="a" style="left:229px;top:575px;width:1px;height:23px;background:#f1f1f1"></div>
<div class="a" style="left:326px;top:575px;width:1px;height:23px;background:#f1f1f1"></div>
<div class="a" style="left:406px;top:575px;width:1px;height:23px;background:#f1f1f1"></div>
<div class="a" style="left:10px;top:579px;width:14px;height:14px;background:#fff;border:1px solid #6a6a6a"></div>
<div class="t" style="left:42.5px;top:580.88px;font-size:11.6px;color:#2b2b2b;">jNet</div>
<div class="t" style="left:239px;width:80px;text-align:center;top:580.88px;font-size:11.6px;color:#2a2ab6;">1.81</div>
<div class="t" style="left:334.4000000000001px;top:580.88px;font-size:11.6px;color:#111;">Internal</div>
<div class="a" style="left:0;top:598px;width:432px;height:23px;background:#f9f9f9;border-bottom:1px solid #efefef"></div>
<div class="a" style="left:34px;top:598px;width:1px;height:23px;background:#f1f1f1"></div>
<div class="a" style="left:174px;top:598px;width:1px;height:23px;background:#f1f1f1"></div>
<div class="a" style="left:229px;top:598px;width:1px;height:23px;background:#f1f1f1"></div>
<div class="a" style="left:326px;top:598px;width:1px;height:23px;background:#f1f1f1"></div>
<div class="a" style="left:406px;top:598px;width:1px;height:23px;background:#f1f1f1"></div>
<div class="a" style="left:10px;top:602px;width:14px;height:14px;background:#fff;border:1px solid #6a6a6a"></div>
<div class="t" style="left:42.5px;top:603.88px;font-size:11.6px;color:#2b2b2b;">jOkHttpUtils2</div>
<div class="t" style="left:239px;width:80px;text-align:center;top:603.88px;font-size:11.6px;color:#2a2ab6;">3.04</div>
<div class="t" style="left:334.4000000000001px;top:603.88px;font-size:11.6px;color:#111;">Internal</div>
<div class="a" style="left:0;top:621px;width:432px;height:23px;background:#f9f9f9;border-bottom:1px solid #efefef"></div>
<div class="a" style="left:34px;top:621px;width:1px;height:23px;background:#f1f1f1"></div>
<div class="a" style="left:174px;top:621px;width:1px;height:23px;background:#f1f1f1"></div>
<div class="a" style="left:229px;top:621px;width:1px;height:23px;background:#f1f1f1"></div>
<div class="a" style="left:326px;top:621px;width:1px;height:23px;background:#f1f1f1"></div>
<div class="a" style="left:406px;top:621px;width:1px;height:23px;background:#f1f1f1"></div>
<div class="a" style="left:10px;top:625px;width:14px;height:14px;background:#fff;border:1px solid #6a6a6a"></div>
<div class="t" style="left:42.5px;top:626.88px;font-size:11.6px;color:#2b2b2b;">jPOI</div>
<div class="t" style="left:239px;width:80px;text-align:center;top:626.88px;font-size:11.6px;color:#2a2ab6;">5.01</div>
<div class="t" style="left:334.4000000000001px;top:626.88px;font-size:11.6px;color:#111;">Internal</div>
<div class="a" style="left:0;top:644px;width:432px;height:23px;background:#f9f9f9;border-bottom:1px solid #efefef"></div>
<div class="a" style="left:34px;top:644px;width:1px;height:23px;background:#f1f1f1"></div>
<div class="a" style="left:174px;top:644px;width:1px;height:23px;background:#f1f1f1"></div>
<div class="a" style="left:229px;top:644px;width:1px;height:23px;background:#f1f1f1"></div>
<div class="a" style="left:326px;top:644px;width:1px;height:23px;background:#f1f1f1"></div>
<div class="a" style="left:406px;top:644px;width:1px;height:23px;background:#f1f1f1"></div>
<div class="a" style="left:10px;top:648px;width:14px;height:14px;background:#fff;border:1px solid #6a6a6a"></div>
<div class="t" style="left:42.5px;top:649.88px;font-size:11.6px;color:#2b2b2b;">jServer</div>
<div class="t" style="left:239px;width:80px;text-align:center;top:649.88px;font-size:11.6px;color:#2a2ab6;">4.03</div>
<div class="t" style="left:334.4000000000001px;top:649.88px;font-size:11.6px;color:#111;">Internal</div>
<div class="a" style="left:0;top:667px;width:432px;height:23px;background:#f9f9f9;border-bottom:1px solid #efefef"></div>
<div class="a" style="left:34px;top:667px;width:1px;height:23px;background:#f1f1f1"></div>
<div class="a" style="left:174px;top:667px;width:1px;height:23px;background:#f1f1f1"></div>
<div class="a" style="left:229px;top:667px;width:1px;height:23px;background:#f1f1f1"></div>
<div class="a" style="left:326px;top:667px;width:1px;height:23px;background:#f1f1f1"></div>
<div class="a" style="left:406px;top:667px;width:1px;height:23px;background:#f1f1f1"></div>
<div class="a" style="left:10px;top:671px;width:14px;height:14px;background:#fff;border:1px solid #6a6a6a"></div>
<div class="t" style="left:42.5px;top:672.88px;font-size:11.6px;color:#2b2b2b;">Json</div>
<div class="t" style="left:239px;width:80px;text-align:center;top:672.88px;font-size:11.6px;color:#2a2ab6;">1.21</div>
<div class="t" style="left:334.4000000000001px;top:672.88px;font-size:11.6px;color:#111;">Internal</div>
<div class="a" style="left:0;top:690px;width:432px;height:23px;background:#f9f9f9;border-bottom:1px solid #efefef"></div>
<div class="a" style="left:34px;top:690px;width:1px;height:23px;background:#f1f1f1"></div>
<div class="a" style="left:174px;top:690px;width:1px;height:23px;background:#f1f1f1"></div>
<div class="a" style="left:229px;top:690px;width:1px;height:23px;background:#f1f1f1"></div>
<div class="a" style="left:326px;top:690px;width:1px;height:23px;background:#f1f1f1"></div>
<div class="a" style="left:406px;top:690px;width:1px;height:23px;background:#f1f1f1"></div>
<div class="a" style="left:10px;top:694px;width:14px;height:14px;background:#fff;border:1px solid #6a6a6a"></div>
<div class="t" style="left:42.5px;top:695.88px;font-size:11.6px;color:#2b2b2b;">jSQL</div>
<div class="t" style="left:239px;width:80px;text-align:center;top:695.88px;font-size:11.6px;color:#2a2ab6;">1.61</div>
<div class="t" style="left:334.4000000000001px;top:695.88px;font-size:11.6px;color:#111;">Internal</div>
<div class="a" style="left:0;top:713px;width:432px;height:23px;background:#f9f9f9;border-bottom:1px solid #efefef"></div>
<div class="a" style="left:34px;top:713px;width:1px;height:23px;background:#f1f1f1"></div>
<div class="a" style="left:174px;top:713px;width:1px;height:23px;background:#f1f1f1"></div>
<div class="a" style="left:229px;top:713px;width:1px;height:23px;background:#f1f1f1"></div>
<div class="a" style="left:326px;top:713px;width:1px;height:23px;background:#f1f1f1"></div>
<div class="a" style="left:406px;top:713px;width:1px;height:23px;background:#f1f1f1"></div>
<div class="a" style="left:10px;top:717px;width:14px;height:14px;background:#fff;border:1px solid #6a6a6a"></div>
<div class="t" style="left:42.5px;top:718.88px;font-size:11.6px;color:#2b2b2b;">jStringUtils</div>
<div class="t" style="left:239px;width:80px;text-align:center;top:718.88px;font-size:11.6px;color:#2a2ab6;">1.03</div>
<div class="t" style="left:334.4000000000001px;top:718.88px;font-size:11.6px;color:#111;">Internal</div>
<div class="a" style="left:0;top:736px;width:432px;height:23px;background:#f9f9f9;border-bottom:1px solid #efefef"></div>
<div class="a" style="left:34px;top:736px;width:1px;height:23px;background:#f1f1f1"></div>
<div class="a" style="left:174px;top:736px;width:1px;height:23px;background:#f1f1f1"></div>
<div class="a" style="left:229px;top:736px;width:1px;height:23px;background:#f1f1f1"></div>
<div class="a" style="left:326px;top:736px;width:1px;height:23px;background:#f1f1f1"></div>
<div class="a" style="left:406px;top:736px;width:1px;height:23px;background:#f1f1f1"></div>
<div class="a" style="left:10px;top:740px;width:14px;height:14px;background:#fff;border:1px solid #6a6a6a"></div>
<div class="t" style="left:42.5px;top:741.88px;font-size:11.6px;color:#2b2b2b;">jSystemTray</div>
<div class="t" style="left:239px;width:80px;text-align:center;top:741.88px;font-size:11.6px;color:#2a2ab6;">1.10</div>
<div class="t" style="left:334.4000000000001px;top:741.88px;font-size:11.6px;color:#111;">Internal</div>
<div class="a" style="left:0;top:759px;width:432px;height:23px;background:#f9f9f9;border-bottom:1px solid #efefef"></div>
<div class="a" style="left:34px;top:759px;width:1px;height:23px;background:#f1f1f1"></div>
<div class="a" style="left:174px;top:759px;width:1px;height:23px;background:#f1f1f1"></div>
<div class="a" style="left:229px;top:759px;width:1px;height:23px;background:#f1f1f1"></div>
<div class="a" style="left:326px;top:759px;width:1px;height:23px;background:#f1f1f1"></div>
<div class="a" style="left:406px;top:759px;width:1px;height:23px;background:#f1f1f1"></div>
<div class="a" style="left:10px;top:763px;width:14px;height:14px;background:#fff;border:1px solid #6a6a6a"></div>
<div class="t" style="left:42.5px;top:764.88px;font-size:11.6px;color:#2b2b2b;">jWebSocketClient</div>
<div class="t" style="left:239px;width:80px;text-align:center;top:764.88px;font-size:11.6px;color:#2a2ab6;">2.00</div>
<div class="t" style="left:334.4000000000001px;top:764.88px;font-size:11.6px;color:#111;">Internal</div>
<div class="a" style="left:0;top:782px;width:432px;height:23px;background:#f9f9f9;border-bottom:1px solid #efefef"></div>
<div class="a" style="left:34px;top:782px;width:1px;height:23px;background:#f1f1f1"></div>
<div class="a" style="left:174px;top:782px;width:1px;height:23px;background:#f1f1f1"></div>
<div class="a" style="left:229px;top:782px;width:1px;height:23px;background:#f1f1f1"></div>
<div class="a" style="left:326px;top:782px;width:1px;height:23px;background:#f1f1f1"></div>
<div class="a" style="left:406px;top:782px;width:1px;height:23px;background:#f1f1f1"></div>
<div class="a" style="left:10px;top:786px;width:14px;height:14px;background:#fff;border:1px solid #6a6a6a"></div>
<div class="t" style="left:42.5px;top:787.88px;font-size:11.6px;color:#2b2b2b;">jXmlSax</div>
<div class="t" style="left:239px;width:80px;text-align:center;top:787.88px;font-size:11.6px;color:#2a2ab6;">1.02</div>
<div class="t" style="left:334.4000000000001px;top:787.88px;font-size:11.6px;color:#111;">Internal</div>
<div class="a" style="left:0;top:805px;width:432px;height:23px;background:#f9f9f9;border-bottom:1px solid #efefef"></div>
<div class="a" style="left:34px;top:805px;width:1px;height:23px;background:#f1f1f1"></div>
<div class="a" style="left:174px;top:805px;width:1px;height:23px;background:#f1f1f1"></div>
<div class="a" style="left:229px;top:805px;width:1px;height:23px;background:#f1f1f1"></div>
<div class="a" style="left:326px;top:805px;width:1px;height:23px;background:#f1f1f1"></div>
<div class="a" style="left:406px;top:805px;width:1px;height:23px;background:#f1f1f1"></div>
<div class="a" style="left:10px;top:809px;width:14px;height:14px;background:#fff;border:1px solid #6a6a6a"></div>
<div class="t" style="left:42.5px;top:810.88px;font-size:11.6px;color:#2b2b2b;">jXUI</div>
<div class="t" style="left:239px;width:80px;text-align:center;top:810.88px;font-size:11.6px;color:#2a2ab6;">2.31</div>
<div class="t" style="left:334.4000000000001px;top:810.88px;font-size:11.6px;color:#111;">Internal</div>
<div class="a" style="left:0;top:828px;width:432px;height:23px;background:#f9f9f9;border-bottom:1px solid #efefef"></div>
<div class="a" style="left:34px;top:828px;width:1px;height:23px;background:#f1f1f1"></div>
<div class="a" style="left:174px;top:828px;width:1px;height:23px;background:#f1f1f1"></div>
<div class="a" style="left:229px;top:828px;width:1px;height:23px;background:#f1f1f1"></div>
<div class="a" style="left:326px;top:828px;width:1px;height:23px;background:#f1f1f1"></div>
<div class="a" style="left:406px;top:828px;width:1px;height:23px;background:#f1f1f1"></div>
<div class="a" style="left:10px;top:832px;width:14px;height:14px;background:#fff;border:1px solid #6a6a6a"></div>
<div class="t" style="left:42.5px;top:833.88px;font-size:11.6px;color:#2b2b2b;">KeyValueStore</div>
<div class="t" style="left:239px;width:80px;text-align:center;top:833.88px;font-size:11.6px;color:#2a2ab6;">2.31</div>
<div class="t" style="left:334.4000000000001px;top:833.88px;font-size:11.6px;color:#111;">Internal</div>
<div class="a" style="left:0;top:851px;width:432px;height:23px;background:#f9f9f9;border-bottom:1px solid #efefef"></div>
<div class="a" style="left:34px;top:851px;width:1px;height:23px;background:#f1f1f1"></div>
<div class="a" style="left:174px;top:851px;width:1px;height:23px;background:#f1f1f1"></div>
<div class="a" style="left:229px;top:851px;width:1px;height:23px;background:#f1f1f1"></div>
<div class="a" style="left:326px;top:851px;width:1px;height:23px;background:#f1f1f1"></div>
<div class="a" style="left:406px;top:851px;width:1px;height:23px;background:#f1f1f1"></div>
<div class="a" style="left:10px;top:855px;width:14px;height:14px;background:#fff;border:1px solid #6a6a6a"></div>
<div class="t" style="left:42.5px;top:856.88px;font-size:11.6px;color:#2b2b2b;">MediaChooser</div>
<div class="t" style="left:239px;width:80px;text-align:center;top:856.88px;font-size:11.6px;color:#2a2ab6;">1.02</div>
<div class="t" style="left:334.4000000000001px;top:856.88px;font-size:11.6px;color:#111;">Internal</div>
<div class="a" style="left:0;top:874px;width:432px;height:23px;background:#f9f9f9;border-bottom:1px solid #efefef"></div>
<div class="a" style="left:34px;top:874px;width:1px;height:23px;background:#f1f1f1"></div>
<div class="a" style="left:174px;top:874px;width:1px;height:23px;background:#f1f1f1"></div>
<div class="a" style="left:229px;top:874px;width:1px;height:23px;background:#f1f1f1"></div>
<div class="a" style="left:326px;top:874px;width:1px;height:23px;background:#f1f1f1"></div>
<div class="a" style="left:406px;top:874px;width:1px;height:23px;background:#f1f1f1"></div>
<div class="a" style="left:10px;top:878px;width:14px;height:14px;background:#fff;border:1px solid #6a6a6a"></div>
<div class="t" style="left:42.5px;top:879.88px;font-size:11.6px;color:#2b2b2b;">OkHttp</div>
<div class="t" style="left:239px;width:80px;text-align:center;top:879.88px;font-size:11.6px;color:#2a2ab6;">1.50</div>
<div class="t" style="left:334.4000000000001px;top:879.88px;font-size:11.6px;color:#111;">Internal</div>
<div class="a" style="left:0;top:897px;width:432px;height:23px;background:#f9f9f9;border-bottom:1px solid #efefef"></div>
<div class="a" style="left:34px;top:897px;width:1px;height:23px;background:#f1f1f1"></div>
<div class="a" style="left:174px;top:897px;width:1px;height:23px;background:#f1f1f1"></div>
<div class="a" style="left:229px;top:897px;width:1px;height:23px;background:#f1f1f1"></div>
<div class="a" style="left:326px;top:897px;width:1px;height:23px;background:#f1f1f1"></div>
<div class="a" style="left:406px;top:897px;width:1px;height:23px;background:#f1f1f1"></div>
<div class="a" style="left:10px;top:901px;width:14px;height:14px;background:#fff;border:1px solid #6a6a6a"></div>
<div class="t" style="left:42.5px;top:902.88px;font-size:11.6px;color:#2b2b2b;">PreoptimizedCLV</div>
<div class="t" style="left:239px;width:80px;text-align:center;top:902.88px;font-size:11.6px;color:#2a2ab6;">1.21</div>
<div class="t" style="left:334.4000000000001px;top:902.88px;font-size:11.6px;color:#111;">Internal</div>
</div>
<div class="a" style="left:1896px;top:142px;width:16px;height:942px;background:#f3f3f3"></div>
<div class="a" style="left:1896px;top:142px;width:15px;height:16px;background:#fff;border:1px solid #c2c2c2"></div>
<svg class="a" style="left:1900px;top:147px;" width="7" height="4" viewBox="0 0 7 4"><path d="M0 4H7L3.5 0z" fill="#bbb"/></svg>
<div class="a" style="left:1896px;top:159px;width:15px;height:757px;background:#fff;border:1px solid #b4b4b4"></div>
<div class="a" style="left:1896px;top:1067px;width:15px;height:16px;background:#fff;border:1px solid #c2c2c2"></div>
<svg class="a" style="left:1900px;top:1073px;" width="7" height="4" viewBox="0 0 7 4"><path d="M0 0H7L3.5 4z" fill="#aaa"/></svg>
<div class="a" style="left:1464px;top:1084px;width:448px;height:16px;background:#f3f3f3"></div>
<div class="a" style="left:1464px;top:1085px;width:15px;height:15px;background:#fff;border:1px solid #c2c2c2"></div>
<svg class="a" style="left:1469px;top:1089px;" width="4" height="7" viewBox="0 0 4 7"><path d="M4 0V7L0 3.5z" fill="#aaa"/></svg>
<div class="a" style="left:1481px;top:1085px;width:269px;height:15px;background:#fff;border:1px solid #b4b4b4"></div>
<div class="a" style="left:1879px;top:1085px;width:15px;height:15px;background:#fff;border:1px solid #c2c2c2"></div>
<svg class="a" style="left:1885px;top:1089px;" width="4" height="7" viewBox="0 0 4 7"><path d="M0 0V7L4 3.5z" fill="#aaa"/></svg>
<div class="a" style="left:1537px;top:1101px;width:78px;height:22px;background:#fdfdfd;border:1px solid #dcdcdc;border-top:none"></div>
<svg class="a" style="left:1470px;top:1106px;" width="12" height="12" viewBox="0 0 12 12"><rect x="0" y="0.5" width="4.5" height="4.5" fill="#333"/><rect x="6.5" y="0.5" width="4.5" height="4.5" fill="#333"/><rect x="0" y="6.5" width="11" height="4.5" fill="#333"/></svg>
<div class="t " style="left:1489.4px;top:1106.18px;font-size:11.6px;color:#333;">Modu...</div>
<svg class="a" style="left:1543px;top:1107px;" width="15" height="12" viewBox="0 0 15 12"><path d="M0.8 1.2H6.8V10.8H0.8zM8.2 1.2H14.2V10.8H8.2z" fill="none" stroke="#333" stroke-width="1.4"/></svg>
<div class="t " style="left:1564px;top:1106.18px;font-size:11.6px;color:#8a3c9a;">Librari...</div>
<svg class="a" style="left:1622px;top:1105px;" width="14" height="12" viewBox="0 0 14 12"><path d="M0 2H5L6.5 0.5H14V12H0z" fill="#e3b96f"/><path d="M0 3.5H14V12H0z" fill="#e8c27e"/></svg>
<div class="t " style="left:1642px;top:1106.18px;font-size:11.6px;color:#333;">Files...</div>
<svg class="a" style="left:1698px;top:1106px;" width="15" height="14" viewBox="0 0 15 14"><g fill="#333"><rect x="0" y="0.5" width="14" height="1.6"/><rect x="0" y="4" width="9" height="1.6"/><rect x="0" y="7.5" width="12" height="1.6"/><rect x="0" y="11" width="7" height="1.6"/></g></svg>
<div class="t " style="left:1719px;top:1106.18px;font-size:11.6px;color:#333;">Logs</div>
<svg class="a" style="left:1757px;top:1106px;" width="14" height="14" viewBox="0 0 14 14"><circle cx="9" cy="5" r="3.8" fill="none" stroke="#333" stroke-width="1.8"/><line x1="6.2" y1="7.8" x2="1.2" y2="12.8" stroke="#333" stroke-width="2.4"/></svg>
<div class="t " style="left:1777px;top:1106.18px;font-size:11.6px;color:#333;">Szybki...</div>
<svg class="a" style="left:1836px;top:1106px;" width="12" height="13" viewBox="0 0 12 13"><rect x="4" y="0.5" width="4.5" height="4.5" fill="#333"/><rect x="9" y="0.5" width="3" height="3" fill="#333"/><circle cx="4" cy="8.8" r="2.4" fill="none" stroke="#1f5fa8" stroke-width="1.3"/><line x1="2.4" y1="10.6" x2="0.4" y2="12.6" stroke="#1f5fa8" stroke-width="1.4"/></svg>
<div class="t " style="left:1855px;top:1106.18px;font-size:11.6px;color:#333;">Znajdź...</div>
<div class="a" style="left:0px;top:1129px;width:1920px;height:1px;background:#cfcfcf"></div>
<div class="a" style="left:0px;top:1130px;width:1920px;height:22px;background:#f7f7f7"></div>
<div class="t " style="left:10px;top:1136.43px;font-size:11.3px;color:#4a4a4a;">B4J-Bridge: Rozłączony</div>
<div class="t " style="left:151px;top:1136.43px;font-size:11.3px;color:#4a4a4a;">12/26/2025 6:12:43 PM</div>
<div class="t " style="left:278px;top:1136.43px;font-size:11.3px;color:#4a4a4a;">Plik zapisano.</div>
<div class="a" style="left:0px;top:1152px;width:1920px;height:48px;background:linear-gradient(90deg,#d5dae7 0%,#d9dae6 25%,#d6e1f0 32%,#dadcea 36%,#dddcec 70%,#d9e3f3 85%,#d3ebf9 100%)"></div>
<div class="a" style="left:0px;top:1152px;width:1920px;height:1px;background:#c9cdd8"></div>
<svg class="a" style="left:682px;top:1164px;" width="25" height="24" viewBox="0 0 25 24"><defs><linearGradient id="wg" x1="0" y1="0" x2="1" y2="1"><stop offset="0" stop-color="#3fb4f2"/><stop offset="1" stop-color="#1576d8"/></linearGradient></defs><rect x="0" y="0" width="11.5" height="11.5" rx="1" fill="url(#wg)"/><rect x="12.8" y="0" width="11.5" height="11.5" rx="1" fill="url(#wg)"/><rect x="0" y="12.6" width="11.5" height="11.5" rx="1" fill="url(#wg)"/><rect x="12.8" y="12.6" width="11.5" height="11.5" rx="1" fill="url(#wg)"/></svg>
<div class="a" style="left:719px;top:1161px;width:219px;height:30px;background:#f3f4f8;border:1px solid #d8dbe5;border-radius:15px"></div>
<svg class="a" style="left:730px;top:1167px;" width="18" height="18" viewBox="0 0 18 18"><circle cx="7.5" cy="7.5" r="5.6" fill="none" stroke="#1a1a1a" stroke-width="1.9"/><line x1="11.6" y1="11.6" x2="16" y2="16" stroke="#1a1a1a" stroke-width="2"/></svg>
<div class="t " style="left:756px;top:1169.57px;font-size:13.5px;color:#444;">Wyszukaj</div>
<svg class="a" style="left:949px;top:1163px;" width="27" height="26" viewBox="0 0 27 26"><rect x="7" y="1" width="17" height="16" rx="1.5" fill="#f4f4f4" stroke="#d0d0d0"/><rect x="1" y="9" width="17" height="16" rx="1" fill="#1e1e1e"/><rect x="5" y="9" width="13" height="12" fill="#444"/></svg>
<svg class="a" style="left:993px;top:1163px;" width="28" height="25" viewBox="0 0 28 25"><path d="M1 3C1 2 2 1 3 1H10L13 4H25C26 4 27 5 27 6V22C27 23 26 24 25 24H3C2 24 1 23 1 22z" fill="#f5b400"/><path d="M1 8H27V22C27 23 26 24 25 24H3C2 24 1 23 1 22z" fill="#ffd54a"/><rect x="8" y="14" width="12" height="8" rx="1" fill="#1a6fd0"/><rect x="8" y="14" width="12" height="2.5" fill="#3a9af0"/></svg>
<div class="a" style="left:1004px;top:1192px;width:6px;height:3px;background:#7c7f8c;border-radius:2px"></div>
<svg class="a" style="left:1037px;top:1163px;" width="26" height="26" viewBox="0 0 26 26"><path d="M13 13L2.17 6.75A12.5 12.5 0 0 1 23.83 6.75z" fill="#db4437"/><path d="M13 13L23.83 6.75A12.5 12.5 0 0 1 13 25.5z" fill="#f4c20d"/><path d="M13 13L13 25.5A12.5 12.5 0 0 1 2.17 6.75z" fill="#0f9d58"/><circle cx="13" cy="13" r="6" fill="#fff"/><circle cx="13" cy="13" r="4.6" fill="#4285f4"/></svg>
<svg class="a" style="left:1082px;top:1164px;" width="26" height="23" viewBox="0 0 26 23"><path d="M8.7 0H17.3L26 15H17.3z" fill="#fbbc04"/><path d="M8.7 0L0 15L4.3 22.5L13 7.5z" fill="#0f9d58"/><path d="M4.3 22.5H21.7L26 15H8.7z" fill="#4285f4"/></svg>
<svg class="a" style="left:1126px;top:1162px;" width="26" height="27" viewBox="0 0 26 27"><rect x="1" y="1" width="24" height="25" rx="3" fill="#f26b1d"/><rect x="1" y="17" width="24" height="9" rx="1" fill="#b0460e"/><text x="13" y="15" font-family="Liberation Sans" font-weight="bold" font-size="14" fill="#fff" text-anchor="middle">F</text><text x="13" y="24.5" font-family="Liberation Sans" font-weight="bold" font-size="6" fill="#fff" text-anchor="middle">FUS</text></svg>
<div class="a" style="left:1136px;top:1192px;width:6px;height:3px;background:#7c7f8c;border-radius:2px"></div>
<div class="a" style="left:1170px;top:1163px;width:26px;height:25px;background:#fff;border:1px solid #e0e0e0"></div>
<div class="t " style="left:1172px;top:1171.26px;font-size:11.5px;color:#e070c0;">B4J</div>
<div class="a" style="left:1180px;top:1192px;width:6px;height:3px;background:#7c7f8c;border-radius:2px"></div>
<svg class="a" style="left:1214px;top:1164px;" width="26" height="26" viewBox="0 0 26 26"><path d="M13 13L2.17 6.75A12.5 12.5 0 0 1 23.83 6.75z" fill="#db4437"/><path d="M13 13L23.83 6.75A12.5 12.5 0 0 1 13 25.5z" fill="#f4c20d"/><path d="M13 13L13 25.5A12.5 12.5 0 0 1 2.17 6.75z" fill="#0f9d58"/><circle cx="13" cy="13" r="6" fill="#fff"/><circle cx="13" cy="13" r="4.6" fill="#4285f4"/></svg>
<svg class="a" style="left:1227px;top:1158px;" width="14" height="14" viewBox="0 0 14 14"><circle cx="7" cy="7" r="6.5" fill="#8a6a5a"/><text x="7" y="10.5" font-family="Liberation Sans" font-size="9" fill="#fff" text-anchor="middle">L</text></svg>
<div class="a" style="left:1224px;top:1192px;width:6px;height:3px;background:#7c7f8c;border-radius:2px"></div>
<svg class="a" style="left:1689px;top:1172px;" width="12" height="8" viewBox="0 0 12 8"><path d="M1 7L6 2L11 7" fill="none" stroke="#222" stroke-width="1.5"/></svg>
<div class="t " style="left:1722.5px;top:1171.76px;font-size:11.5px;color:#222;">POL</div>
<svg class="a" style="left:1762px;top:1167px;" width="18" height="15" viewBox="0 0 18 15"><path d="M1.5 6A11 11 0 0 1 16.5 6M4 8.8A7 7 0 0 1 14 8.8M6.6 11.4A3.4 3.4 0 0 1 11.4 11.4" fill="none" stroke="#222" stroke-width="1.4"/><circle cx="9" cy="13.2" r="1.2" fill="#222"/></svg>
<svg class="a" style="left:1787px;top:1168px;" width="17" height="14" viewBox="0 0 17 14"><path d="M1 4.8H3.6L7 2V12L3.6 9.2H1z" fill="none" stroke="#222" stroke-width="1.2"/><path d="M9.4 5A2.6 2.6 0 0 1 9.4 9M11.4 3.4A5 5 0 0 1 11.4 10.6" fill="none" stroke="#222" stroke-width="1.1"/><path d="M13.4 2A7 7 0 0 1 13.4 12" fill="none" stroke="#999" stroke-width="0.8"/></svg>
<svg class="a" style="left:1810px;top:1167px;" width="19" height="14" viewBox="0 0 19 14"><rect x="1.5" y="4" width="13" height="8" rx="1" fill="none" stroke="#222" stroke-width="1.3"/><rect x="3.2" y="5.8" width="9.6" height="4.4" fill="#222"/><rect x="15" y="6.5" width="1.8" height="3" fill="#222"/><path d="M3.2 0.5L2.4 4.6L5 4L4.2 7.5" fill="none" stroke="#222" stroke-width="1.1"/></svg>
<div class="t" style="right:19px;top:1161.64px;font-size:12px;color:#111;">18:35</div>
<div class="t" style="right:19px;top:1177.84px;font-size:12px;color:#111;">26.12.2025</div>
</body></html>
